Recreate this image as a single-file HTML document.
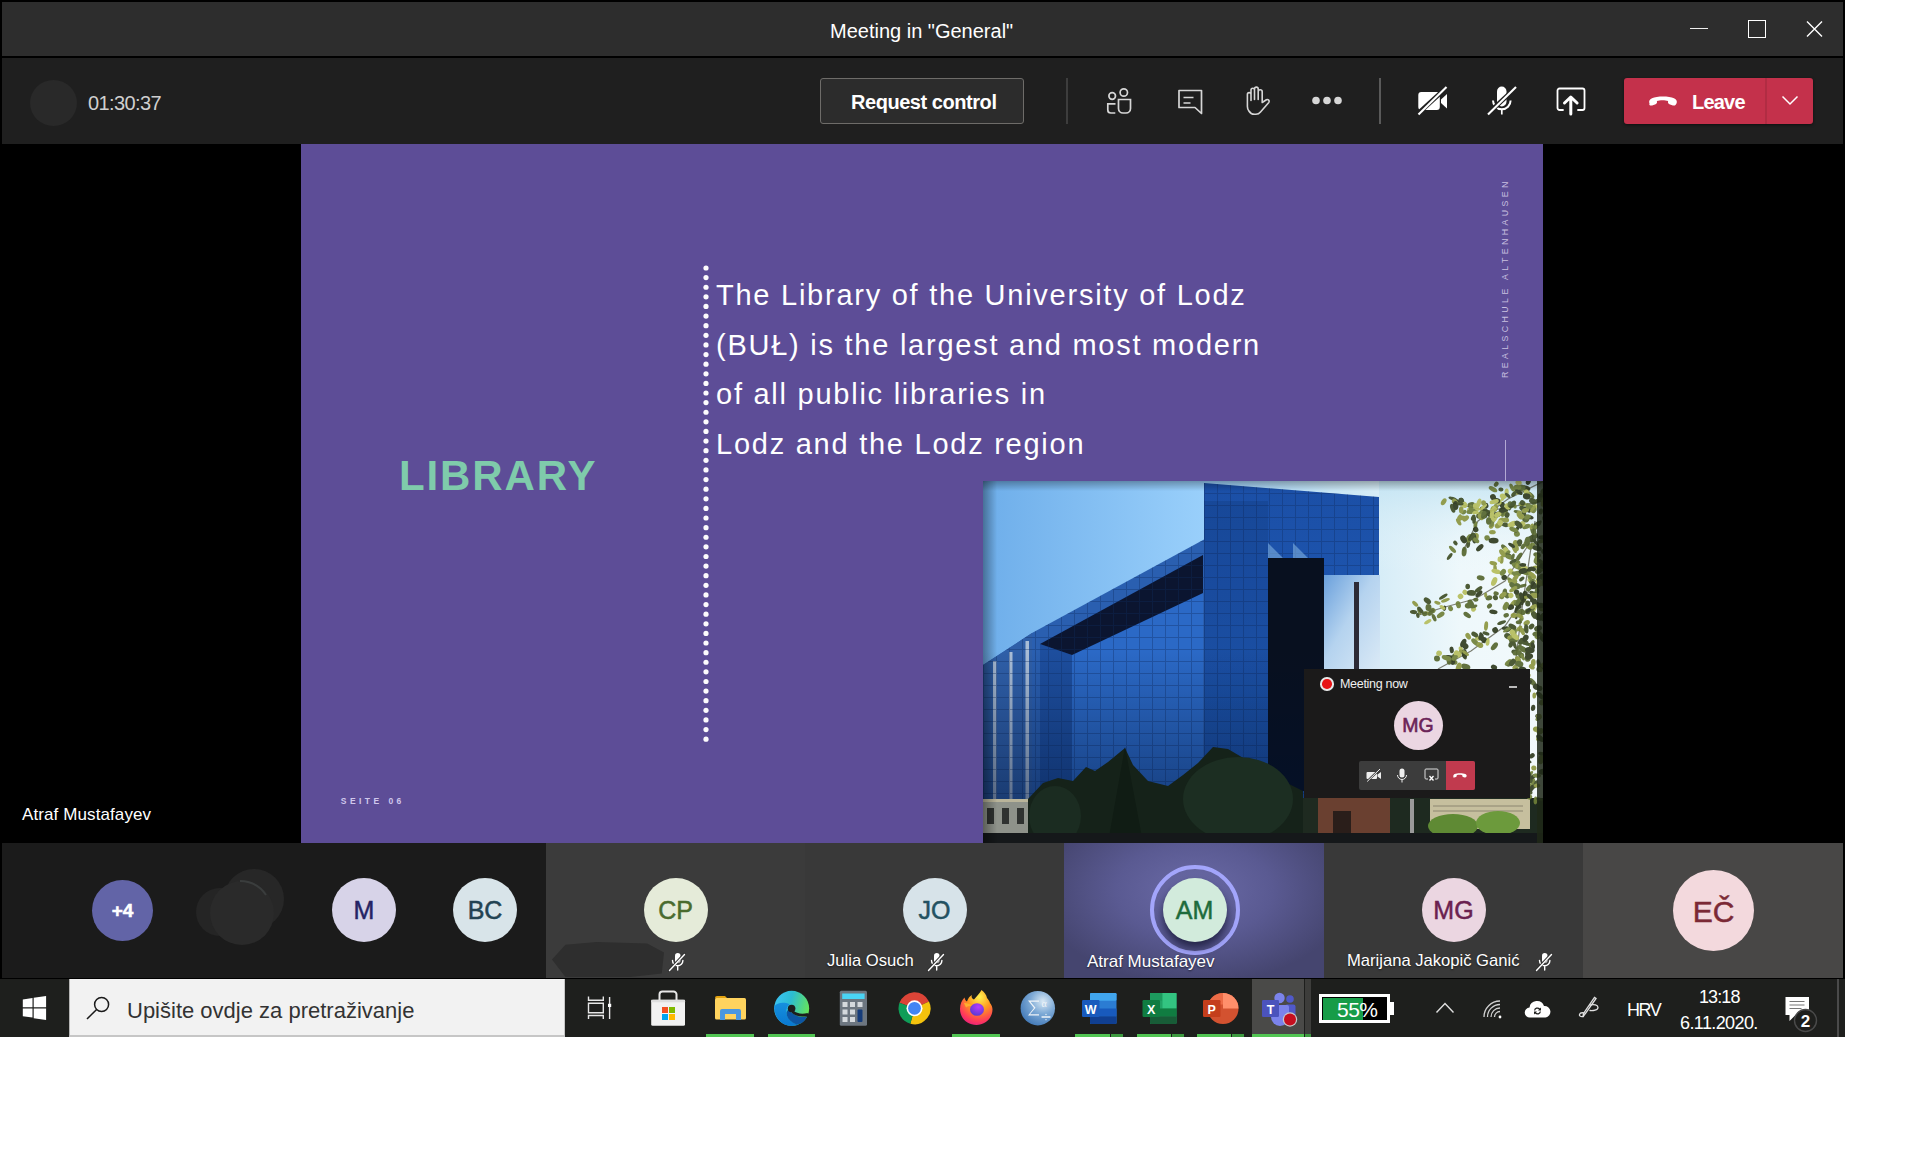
<!DOCTYPE html>
<html><head><meta charset="utf-8">
<style>
*{margin:0;padding:0;box-sizing:border-box}
html,body{width:1920px;height:1162px;overflow:hidden;background:#fff;font-family:"Liberation Sans",sans-serif}
.a{position:absolute}
#win{left:0;top:0;width:1845px;height:979px;background:#000}
#title{left:2px;top:2px;width:1841px;height:54px;background:#2d2d2d}
#tool{left:2px;top:58px;width:1841px;height:86px;background:#1f1f1f}
#slide{left:301px;top:144px;width:1242px;height:699px;background:#5d4d97;overflow:hidden}
#strip{left:2px;top:843px;width:1841px;height:135px;background:#1b1b1b}
.av{position:absolute;border-radius:50%;text-align:center;font-family:"Liberation Sans",sans-serif;-webkit-text-stroke:0.5px currentColor}
.nm{position:absolute;white-space:nowrap;line-height:1;font-size:17px;color:#fff;text-shadow:0 1px 2px rgba(0,0,0,.6)}
#task{left:0;top:979px;width:1845px;height:58px;background:#1e1f1d}
.t{white-space:nowrap;line-height:1}
</style></head><body>
<div id="win" class="a"></div>
<div id="title" class="a"></div>
<div class="a t" style="left:830px;top:21px;font-size:20px;color:#fff">Meeting in "General"</div>

<div class="a" style="left:1690px;top:27.5px;width:18px;height:1.2px;background:#eee"></div>
<div class="a" style="left:1748px;top:20px;width:17.5px;height:17.5px;border:1.5px solid #fff"></div>
<svg class="a" style="left:1804px;top:18px" width="22" height="22" viewBox="0 0 22 22" stroke="#fff" stroke-width="1.4"><path d="M3 3.5l15 15M18 3.5l-15 15"/></svg>
<div id="tool" class="a"></div>

<div class="a" style="left:30px;top:80px;width:47px;height:46px;border-radius:50%;background:#292929"></div>
<div class="a t" style="left:88px;top:93px;font-size:20px;color:#cfcfcf;letter-spacing:-0.6px">01:30:37</div>
<div class="a" style="left:820px;top:78px;width:204px;height:46px;border:1.5px solid #6e6c69;border-radius:3px;background:#2c2c2c"></div>
<div class="a t" style="left:851px;top:92px;font-size:20px;font-weight:bold;color:#fff;letter-spacing:-0.45px">Request control</div>
<div class="a" style="left:1066px;top:78px;width:2px;height:46px;background:#3d3d3d"></div>
<div class="a" style="left:1379px;top:78px;width:2px;height:46px;background:#5a5a5a"></div>
<svg class="a" style="left:1100px;top:84px" width="40" height="40" viewBox="0 0 40 40" fill="none" stroke="#d6d6d6" stroke-width="1.7">
 <circle cx="12.2" cy="12" r="3.3"/><circle cx="23.8" cy="8.5" r="3.7"/>
 <path d="M15.5 19.8H7.8v6.2a3 3 0 0 0 3 3h4.5"/><path d="M18.5 15.5h12v9a4.5 4.5 0 0 1-4.5 4.5h-3a4.5 4.5 0 0 1-4.5-4.5z"/>
</svg>
<svg class="a" style="left:1170px;top:80px" width="40" height="40" viewBox="0 0 40 40" fill="none" stroke="#d6d6d6" stroke-width="1.7" stroke-linejoin="round">
 <path d="M9 10.5h22.5v23l-6.5-6H9z"/><path d="M13.5 17.5h10M13.5 23h7"/>
</svg>
<svg class="a" style="left:1236px;top:80px" width="40" height="40" viewBox="0 0 40 40" fill="none" stroke="#d6d6d6" stroke-width="1.6" stroke-linejoin="round" stroke-linecap="round">
 <path d="M15 20.5V14.4a1.8 1.8 0 0 0-3.6 0V26.5q0 2.5 1.5 4.5a6.5 6.5 0 0 0 5.5 3.3h1.5a6 6 0 0 0 4.6-2.3l8.3-9.6a1.8 1.8 0 0 0-2.4-2.6L26.2 22.5V11.8a2 2 0 0 0-4 0V19.5M22.2 19.5V9a1.85 1.85 0 0 0-3.7 0V19.5M18.5 19.5V10a1.75 1.75 0 0 0-3.5 0V20.5"/>
</svg>
<svg class="a" style="left:1308px;top:90px" width="40" height="20" viewBox="0 0 40 20" fill="#d6d6d6">
 <circle cx="8" cy="10.5" r="3.8"/><circle cx="19" cy="10.5" r="3.8"/><circle cx="30" cy="10.5" r="3.8"/>
</svg>
<svg class="a" style="left:1412px;top:80px" width="40" height="40" viewBox="0 0 40 40">
 <path d="M6.3 15a3 3 0 0 1 3-3h15.5a3 3 0 0 1 3 3v12a3 3 0 0 1-3 3h-15.5a3 3 0 0 1-3-3z" fill="#fff"/>
 <path d="M29 19.5l6-5.5v14.5l-6-5.5z" fill="#fff"/>
 <path d="M5.5 34L34 8" stroke="#1f1f1f" stroke-width="4.5"/>
 <path d="M6.5 34.5L34.5 7" stroke="#fff" stroke-width="2.1"/>
</svg>
<svg class="a" style="left:1482px;top:80px" width="40" height="40" viewBox="0 0 40 40">
 <rect x="15" y="6.5" width="9.5" height="20" rx="4.75" fill="#fff"/>
 <path d="M11 20.5a8.8 8.8 0 0 0 17.6 0" fill="none" stroke="#fff" stroke-width="2"/>
 <path d="M19.8 29v5.5" stroke="#fff" stroke-width="1.7"/>
 <path d="M5.5 34L33.5 8" stroke="#1f1f1f" stroke-width="4.5"/>
 <path d="M6 34.5L34 7" stroke="#fff" stroke-width="2.1"/>
</svg>
<svg class="a" style="left:1551px;top:80px" width="40" height="40" viewBox="0 0 40 40" fill="none" stroke="#fff" stroke-width="1.8" stroke-linejoin="round" stroke-linecap="round">
 <path d="M12 30H8.5a2 2 0 0 1-2-2V10.5a2 2 0 0 1 2-2h23a2 2 0 0 1 2 2V28a2 2 0 0 1-2 2H27"/>
 <path d="M19.8 34V19M13.5 23l6.3-6 6.3 6" stroke-width="3"/>
</svg>
<div class="a" style="left:1624px;top:78px;width:189px;height:46px;border-radius:3px;background:#c4314b;box-shadow:0 1px 3px rgba(0,0,0,.5)"></div>
<div class="a" style="left:1765px;top:78px;width:2px;height:46px;background:#b12c43"></div>
<svg class="a" style="left:1646px;top:90px" width="34" height="20" viewBox="0 0 34 20">
 <path d="M3.5 13.5c-1-2 0-4 2.5-5.2C11 6 23 6 28 8.3c2.5 1.2 3.5 3.2 2.5 5.2l-.8 1.2c-.6.9-1.8 1-2.8.7l-3.5-1.1c-1-.3-1.5-1.2-1.4-2.2l.1-1.2c-3-1-8.2-1-11.2 0l.1 1.2c.1 1-.4 1.9-1.4 2.2L6.1 15.4c-1 .3-2.2.2-2.8-.7z" fill="#fff"/>
</svg>
<div class="a t" style="left:1692px;top:92px;font-size:20px;font-weight:bold;color:#fff;letter-spacing:-0.8px">Leave</div>
<svg class="a" style="left:1780px;top:92px" width="20" height="16" viewBox="0 0 20 16" fill="none" stroke="#fff" stroke-width="1.5">
 <path d="M2.5 4.5L10 12l7.5-7.5"/>
</svg>
<div id="slide" class="a">
 <div class="a t" style="left:98px;top:311px;font-size:42px;font-weight:bold;color:#7fcbab;letter-spacing:1.9px">LIBRARY</div>
 <svg class="a" style="left:400.7px;top:120.3px" width="8" height="480" viewBox="0 0 8 480" fill="#fdfbfd"><circle cx="4" cy="4.00" r="2.6"/><circle cx="4" cy="13.62" r="2.6"/><circle cx="4" cy="23.23" r="2.6"/><circle cx="4" cy="32.85" r="2.6"/><circle cx="4" cy="42.46" r="2.6"/><circle cx="4" cy="52.08" r="2.6"/><circle cx="4" cy="61.70" r="2.6"/><circle cx="4" cy="71.31" r="2.6"/><circle cx="4" cy="80.93" r="2.6"/><circle cx="4" cy="90.54" r="2.6"/><circle cx="4" cy="100.16" r="2.6"/><circle cx="4" cy="109.78" r="2.6"/><circle cx="4" cy="119.39" r="2.6"/><circle cx="4" cy="129.01" r="2.6"/><circle cx="4" cy="138.62" r="2.6"/><circle cx="4" cy="148.24" r="2.6"/><circle cx="4" cy="157.86" r="2.6"/><circle cx="4" cy="167.47" r="2.6"/><circle cx="4" cy="177.09" r="2.6"/><circle cx="4" cy="186.70" r="2.6"/><circle cx="4" cy="196.32" r="2.6"/><circle cx="4" cy="205.94" r="2.6"/><circle cx="4" cy="215.55" r="2.6"/><circle cx="4" cy="225.17" r="2.6"/><circle cx="4" cy="234.78" r="2.6"/><circle cx="4" cy="244.40" r="2.6"/><circle cx="4" cy="254.02" r="2.6"/><circle cx="4" cy="263.63" r="2.6"/><circle cx="4" cy="273.25" r="2.6"/><circle cx="4" cy="282.86" r="2.6"/><circle cx="4" cy="292.48" r="2.6"/><circle cx="4" cy="302.10" r="2.6"/><circle cx="4" cy="311.71" r="2.6"/><circle cx="4" cy="321.33" r="2.6"/><circle cx="4" cy="330.94" r="2.6"/><circle cx="4" cy="340.56" r="2.6"/><circle cx="4" cy="350.18" r="2.6"/><circle cx="4" cy="359.79" r="2.6"/><circle cx="4" cy="369.41" r="2.6"/><circle cx="4" cy="379.02" r="2.6"/><circle cx="4" cy="388.64" r="2.6"/><circle cx="4" cy="398.26" r="2.6"/><circle cx="4" cy="407.87" r="2.6"/><circle cx="4" cy="417.49" r="2.6"/><circle cx="4" cy="427.10" r="2.6"/><circle cx="4" cy="436.72" r="2.6"/><circle cx="4" cy="446.34" r="2.6"/><circle cx="4" cy="455.95" r="2.6"/><circle cx="4" cy="465.57" r="2.6"/><circle cx="4" cy="475.18" r="2.6"/></svg>
 <div class="a" style="left:415px;top:127px;font-size:29px;line-height:49.6px;color:#fff;letter-spacing:1.75px;white-space:nowrap">The Library of the University of Lodz<br>(BUŁ) is the largest and most modern<br>of all public libraries in<br>Lodz and the Lodz region</div>
 <div class="a t" style="left:1199.5px;top:38px;width:7px;height:196px;"><div class="a t" style="left:0;top:196px;transform:rotate(-90deg);transform-origin:0 0;font-size:8.8px;color:#c9c0e0;letter-spacing:3.4px">REALSCHULE ALTENHAUSEN</div></div>
 <div class="a" style="left:1203.5px;top:296px;width:1px;height:42px;background:#b3a9d4"></div>
<svg class="a" style="left:682px;top:337px" width="561" height="362" viewBox="0 0 561 362">
 <defs>
  <linearGradient id="sky" x1="0" y1="0" x2="1" y2="0">
   <stop offset="0" stop-color="#6eaeea"/><stop offset="0.4" stop-color="#9ad0fb"/><stop offset="0.62" stop-color="#c8e6f5"/><stop offset="0.85" stop-color="#eef8fb"/><stop offset="1" stop-color="#f2f9fb"/>
  </linearGradient>
  <linearGradient id="skyv" x1="0" y1="0" x2="0" y2="1">
   <stop offset="0" stop-color="#bfe2f2" stop-opacity="0.8"/><stop offset="0.5" stop-color="#eaf6fa" stop-opacity="0"/>
  </linearGradient>
  <linearGradient id="facev" x1="0" y1="0" x2="0" y2="1">
   <stop offset="0" stop-color="#1f57b0"/><stop offset="0.7" stop-color="#2c6cc8"/><stop offset="1" stop-color="#2a62b8"/>
  </linearGradient>
  <linearGradient id="tow" x1="0" y1="0" x2="0" y2="1">
   <stop offset="0" stop-color="#1b4fa6"/><stop offset="1" stop-color="#2260bf"/>
  </linearGradient>
  <linearGradient id="refl" x1="0" y1="0" x2="1" y2="1">
   <stop offset="0" stop-color="#6aa0dc"/><stop offset="0.45" stop-color="#b5d3ef"/><stop offset="1" stop-color="#dbeaf6"/>
  </linearGradient>
  <pattern id="grid" width="13" height="12" patternUnits="userSpaceOnUse">
   <path d="M0 0.5H13M0.5 0V12" stroke="#0c2a5e" stroke-width="1" opacity="0.35"/>
  </pattern>
  <linearGradient id="vigl" x1="0" y1="0" x2="1" y2="0"><stop offset="0" stop-color="#000" stop-opacity="0.35"/><stop offset="1" stop-color="#000" stop-opacity="0"/></linearGradient>
  <linearGradient id="vigt" x1="0" y1="0" x2="0" y2="1"><stop offset="0" stop-color="#000" stop-opacity="0.3"/><stop offset="1" stop-color="#000" stop-opacity="0"/></linearGradient>
 </defs>
 <rect width="561" height="362" fill="url(#sky)"/>
 <rect x="396" width="165" height="180" fill="url(#skyv)"/>
 <!-- left wing -->
 <path d="M0 184L49 152L221 58.6V362H0z" fill="#2a5fb0"/>
 <path d="M57 163L220 74V362H57z" fill="url(#facev)"/>
 <path d="M89 174L220 112V362H89z" fill="#2b69c6"/>
 <path d="M57 163L89 174V362H57z" fill="#1d4e9e"/>
 <path d="M0 184L49 152V362H0z" fill="#2f5fa8"/>
 <path d="M10 180h3.5v148h-3.5zM26 171h3.5v157h-3.5zM42.5 160h3.5v168h-3.5z" fill="#a9bdd6"/>
 <path d="M57 163L220 74V112L89 174z" fill="#0b1530"/>
 <path d="M49 152L221 58.6V362H49z" fill="url(#grid)"/>
 <path d="M0 184L49 152V362H0z" fill="url(#grid)"/>
 <!-- tower -->
 <path d="M221 2L396 16V94L351 101V362H221z" fill="url(#tow)"/>
 <path d="M221 2L396 16V94L351 101V362H221z" fill="url(#grid)"/>
 <path d="M285 62L300 77H285zM310 62L325 77H310z" fill="#7fb0e0" opacity="0.6"/>
 <path d="M341 94H397V190H341z" fill="url(#refl)"/>
 <path d="M285 77H341V310H285z" fill="#08101f"/>
 <path d="M371 101h5V190h-5z" fill="#2c2a36"/>
 <linearGradient id="dk" x1="0" y1="0" x2="0" y2="1"><stop offset="0" stop-color="#001030" stop-opacity="0"/><stop offset="1" stop-color="#001030" stop-opacity="0.45"/></linearGradient>
 <rect x="0" y="170" width="341" height="150" fill="url(#dk)"/>
 <rect x="221" y="20" width="64" height="300" fill="#001030" opacity="0.12"/>
 <!-- trees -->
 <path d="M45 362V318L60 302L75 297L90 300L103 286L112 290L125 281L142 267L150 284L165 300L185 305L200 294L215 282L230 266L245 268L262 278L280 290L300 300L320 310V362z" fill="#152219"/>
 <path d="M125 362L142 266L160 362z" fill="#101c14"/>
 <ellipse cx="255" cy="318" rx="55" ry="42" fill="#1c2e22"/>
 <ellipse cx="72" cy="335" rx="26" ry="30" fill="#1b2c21"/>
 <path d="M0 319H45V362H0z" fill="#8e928a"/>
 <path d="M4 327h7v16h-7zM19 327h7v16h-7zM34 327h7v16h-7z" fill="#2f3230"/>
 <path d="M0 318H45V321H0z" fill="#b9b49a"/>
 <path d="M320 317H561V362H320z" fill="#1e2a20"/>
 <path d="M335 317H407V355H335z" fill="#6a4030"/>
 <path d="M350 330h18v25h-18z" fill="#2a1e1a"/>
 <path d="M447 318H547V348H447z" fill="#c6bf9e"/>
 <path d="M450 325h90M450 330h90" stroke="#8c8670" stroke-width="1"/>
 <ellipse cx="470" cy="345" rx="25" ry="12" fill="#5f8a34"/><ellipse cx="515" cy="342" rx="22" ry="12" fill="#6c9a3c"/>
 <path d="M427 318h4v44h-4z" fill="#9a9a9a"/>
 <path d="M0 352H561V362H0z" fill="#15181a"/>
 <!-- right tree -->
 <g stroke="#4a4a38" stroke-width="1.2" fill="none" opacity="0.7"><path d="M561 0 L525 18 L495 40 L480 70 M548 60 L522 100 L492 118 L462 126 L436 134 M556 95 L522 145 L488 170 L455 188 M552 40 L540 120 L532 185 M561 20 L505 30 L470 22"/></g>
 <g opacity="0.92"><ellipse cx="538.8" cy="27.1" rx="2.7" ry="2.4" transform="rotate(65 538.8 27.1)" fill="#3f4d24"/><ellipse cx="485.2" cy="63.6" rx="3.5" ry="1.9" transform="rotate(99 485.2 63.6)" fill="#3f4d24"/><ellipse cx="492.8" cy="56.1" rx="4.1" ry="2.9" transform="rotate(103 492.8 56.1)" fill="#8c9640"/><ellipse cx="559.2" cy="16.2" rx="2.8" ry="2.2" transform="rotate(97 559.2 16.2)" fill="#b5bd5c"/><ellipse cx="533.4" cy="9.8" rx="4.0" ry="2.5" transform="rotate(67 533.4 9.8)" fill="#b5bd5c"/><ellipse cx="482.8" cy="37.5" rx="3.7" ry="2.3" transform="rotate(139 482.8 37.5)" fill="#8c9640"/><ellipse cx="497.0" cy="34.6" rx="4.5" ry="2.6" transform="rotate(43 497.0 34.6)" fill="#b5bd5c"/><ellipse cx="520.3" cy="15.2" rx="3.6" ry="2.5" transform="rotate(13 520.3 15.2)" fill="#b5bd5c"/><ellipse cx="520.3" cy="16.6" rx="3.7" ry="1.7" transform="rotate(120 520.3 16.6)" fill="#b5bd5c"/><ellipse cx="512.3" cy="26.9" rx="4.2" ry="2.4" transform="rotate(104 512.3 26.9)" fill="#8c9640"/><ellipse cx="508.6" cy="44.6" rx="3.3" ry="2.4" transform="rotate(122 508.6 44.6)" fill="#8c9640"/><ellipse cx="519.3" cy="23.5" rx="2.6" ry="2.2" transform="rotate(30 519.3 23.5)" fill="#3f4d24"/><ellipse cx="515.0" cy="33.4" rx="4.3" ry="2.2" transform="rotate(165 515.0 33.4)" fill="#8c9640"/><ellipse cx="536.9" cy="8.3" rx="4.7" ry="2.7" transform="rotate(155 536.9 8.3)" fill="#6f7f38"/><ellipse cx="508.2" cy="39.9" rx="3.5" ry="1.9" transform="rotate(14 508.2 39.9)" fill="#56662e"/><ellipse cx="539.5" cy="22.9" rx="4.0" ry="2.0" transform="rotate(0 539.5 22.9)" fill="#8c9640"/><ellipse cx="502.7" cy="24.7" rx="2.8" ry="2.8" transform="rotate(171 502.7 24.7)" fill="#2f3a1e"/><ellipse cx="515.7" cy="43.9" rx="4.4" ry="2.8" transform="rotate(143 515.7 43.9)" fill="#8c9640"/><ellipse cx="511.7" cy="26.7" rx="3.5" ry="1.9" transform="rotate(177 511.7 26.7)" fill="#8c9640"/><ellipse cx="542.6" cy="10.9" rx="2.5" ry="1.8" transform="rotate(18 542.6 10.9)" fill="#6f7f38"/><ellipse cx="508.5" cy="36.7" rx="3.4" ry="2.5" transform="rotate(171 508.5 36.7)" fill="#b5bd5c"/><ellipse cx="540.8" cy="30.5" rx="5.0" ry="2.3" transform="rotate(87 540.8 30.5)" fill="#3f4d24"/><ellipse cx="510.0" cy="16.0" rx="3.0" ry="2.9" transform="rotate(65 510.0 16.0)" fill="#2f3a1e"/><ellipse cx="521.2" cy="31.5" rx="4.9" ry="2.8" transform="rotate(125 521.2 31.5)" fill="#6f7f38"/><ellipse cx="519.2" cy="24.0" rx="3.1" ry="2.4" transform="rotate(90 519.2 24.0)" fill="#2f3a1e"/><ellipse cx="492.4" cy="44.2" rx="4.3" ry="1.9" transform="rotate(93 492.4 44.2)" fill="#6f7f38"/><ellipse cx="509.0" cy="42.5" rx="3.7" ry="1.9" transform="rotate(108 509.0 42.5)" fill="#6f7f38"/><ellipse cx="547.3" cy="13.6" rx="4.9" ry="2.1" transform="rotate(39 547.3 13.6)" fill="#56662e"/><ellipse cx="508.9" cy="33.4" rx="5.0" ry="2.5" transform="rotate(0 508.9 33.4)" fill="#2f3a1e"/><ellipse cx="513.2" cy="3.3" rx="2.8" ry="2.1" transform="rotate(128 513.2 3.3)" fill="#56662e"/><ellipse cx="522.8" cy="39.1" rx="3.3" ry="2.7" transform="rotate(174 522.8 39.1)" fill="#8c9640"/><ellipse cx="515.8" cy="21.0" rx="2.9" ry="3.0" transform="rotate(4 515.8 21.0)" fill="#b5bd5c"/><ellipse cx="486.2" cy="57.3" rx="4.6" ry="3.0" transform="rotate(118 486.2 57.3)" fill="#6f7f38"/><ellipse cx="543.0" cy="7.1" rx="4.5" ry="2.6" transform="rotate(18 543.0 7.1)" fill="#2f3a1e"/><ellipse cx="469.5" cy="68.3" rx="4.6" ry="1.9" transform="rotate(45 469.5 68.3)" fill="#6f7f38"/><ellipse cx="513.4" cy="19.7" rx="3.9" ry="2.8" transform="rotate(10 513.4 19.7)" fill="#2f3a1e"/><ellipse cx="511.2" cy="20.7" rx="4.8" ry="2.2" transform="rotate(165 511.2 20.7)" fill="#b5bd5c"/><ellipse cx="557.1" cy="16.7" rx="4.7" ry="2.7" transform="rotate(109 557.1 16.7)" fill="#56662e"/><ellipse cx="523.6" cy="11.3" rx="3.9" ry="2.1" transform="rotate(93 523.6 11.3)" fill="#b5bd5c"/><ellipse cx="517.9" cy="8.5" rx="2.6" ry="1.9" transform="rotate(7 517.9 8.5)" fill="#3f4d24"/><ellipse cx="495.7" cy="22.2" rx="4.8" ry="2.2" transform="rotate(110 495.7 22.2)" fill="#b5bd5c"/><ellipse cx="505.7" cy="40.0" rx="3.8" ry="2.7" transform="rotate(91 505.7 40.0)" fill="#56662e"/><ellipse cx="510.5" cy="28.0" rx="3.1" ry="2.4" transform="rotate(169 510.5 28.0)" fill="#8c9640"/><ellipse cx="557.6" cy="14.6" rx="2.7" ry="1.9" transform="rotate(13 557.6 14.6)" fill="#2f3a1e"/><ellipse cx="545.7" cy="26.5" rx="4.8" ry="2.5" transform="rotate(65 545.7 26.5)" fill="#6f7f38"/><ellipse cx="491.2" cy="57.5" rx="4.9" ry="2.2" transform="rotate(87 491.2 57.5)" fill="#2f3a1e"/><ellipse cx="492.9" cy="59.3" rx="3.8" ry="2.1" transform="rotate(35 492.9 59.3)" fill="#6f7f38"/><ellipse cx="543.8" cy="11.8" rx="3.6" ry="2.6" transform="rotate(69 543.8 11.8)" fill="#b5bd5c"/><ellipse cx="498.1" cy="34.9" rx="5.0" ry="2.7" transform="rotate(174 498.1 34.9)" fill="#3f4d24"/><ellipse cx="548.7" cy="27.3" rx="3.0" ry="2.7" transform="rotate(147 548.7 27.3)" fill="#2f3a1e"/><ellipse cx="488.7" cy="55.8" rx="4.8" ry="2.4" transform="rotate(126 488.7 55.8)" fill="#3f4d24"/><ellipse cx="535.6" cy="8.0" rx="4.7" ry="2.0" transform="rotate(3 535.6 8.0)" fill="#3f4d24"/><ellipse cx="504.1" cy="56.9" rx="2.7" ry="2.8" transform="rotate(81 504.1 56.9)" fill="#6f7f38"/><ellipse cx="466.7" cy="75.6" rx="4.1" ry="1.7" transform="rotate(127 466.7 75.6)" fill="#3f4d24"/><ellipse cx="481.2" cy="70.6" rx="4.8" ry="2.5" transform="rotate(95 481.2 70.6)" fill="#56662e"/><ellipse cx="524.7" cy="14.4" rx="3.4" ry="1.6" transform="rotate(45 524.7 14.4)" fill="#3f4d24"/><ellipse cx="511.7" cy="37.0" rx="4.1" ry="2.5" transform="rotate(118 511.7 37.0)" fill="#b5bd5c"/><ellipse cx="480.6" cy="58.4" rx="4.2" ry="3.0" transform="rotate(61 480.6 58.4)" fill="#2f3a1e"/><ellipse cx="510.6" cy="59.6" rx="5.0" ry="2.8" transform="rotate(2 510.6 59.6)" fill="#2f3a1e"/><ellipse cx="492.7" cy="48.5" rx="2.7" ry="2.8" transform="rotate(156 492.7 48.5)" fill="#2f3a1e"/><ellipse cx="472.4" cy="62.0" rx="2.6" ry="1.9" transform="rotate(48 472.4 62.0)" fill="#3f4d24"/><ellipse cx="509.4" cy="51.2" rx="3.3" ry="2.1" transform="rotate(0 509.4 51.2)" fill="#8c9640"/><ellipse cx="549.1" cy="19.6" rx="3.1" ry="2.7" transform="rotate(16 549.1 19.6)" fill="#3f4d24"/><ellipse cx="535.6" cy="1.7" rx="3.2" ry="2.5" transform="rotate(15 535.6 1.7)" fill="#b5bd5c"/><ellipse cx="496.8" cy="66.7" rx="4.5" ry="2.4" transform="rotate(137 496.8 66.7)" fill="#2f3a1e"/><ellipse cx="444.8" cy="140.7" rx="4.1" ry="1.7" transform="rotate(150 444.8 140.7)" fill="#b5bd5c"/><ellipse cx="484.7" cy="105.5" rx="2.8" ry="2.3" transform="rotate(90 484.7 105.5)" fill="#3f4d24"/><ellipse cx="444.4" cy="119.8" rx="4.2" ry="2.6" transform="rotate(41 444.4 119.8)" fill="#3f4d24"/><ellipse cx="522.2" cy="43.9" rx="3.4" ry="2.2" transform="rotate(9 522.2 43.9)" fill="#3f4d24"/><ellipse cx="481.9" cy="111.3" rx="2.5" ry="2.7" transform="rotate(134 481.9 111.3)" fill="#b5bd5c"/><ellipse cx="457.7" cy="133.9" rx="4.4" ry="2.3" transform="rotate(145 457.7 133.9)" fill="#6f7f38"/><ellipse cx="530.3" cy="80.6" rx="4.1" ry="2.2" transform="rotate(152 530.3 80.6)" fill="#3f4d24"/><ellipse cx="497.7" cy="96.9" rx="4.0" ry="2.5" transform="rotate(13 497.7 96.9)" fill="#56662e"/><ellipse cx="512.1" cy="87.5" rx="4.1" ry="1.8" transform="rotate(86 512.1 87.5)" fill="#8c9640"/><ellipse cx="518.6" cy="78.6" rx="4.2" ry="2.0" transform="rotate(92 518.6 78.6)" fill="#8c9640"/><ellipse cx="510.3" cy="82.2" rx="3.9" ry="2.0" transform="rotate(15 510.3 82.2)" fill="#8c9640"/><ellipse cx="521.8" cy="67.3" rx="4.9" ry="2.2" transform="rotate(48 521.8 67.3)" fill="#56662e"/><ellipse cx="449.9" cy="129.5" rx="2.7" ry="2.6" transform="rotate(47 449.9 129.5)" fill="#6f7f38"/><ellipse cx="544.5" cy="64.4" rx="4.7" ry="2.6" transform="rotate(41 544.5 64.4)" fill="#8c9640"/><ellipse cx="530.2" cy="122.5" rx="4.2" ry="2.2" transform="rotate(130 530.2 122.5)" fill="#8c9640"/><ellipse cx="512.4" cy="116.6" rx="2.5" ry="2.7" transform="rotate(151 512.4 116.6)" fill="#3f4d24"/><ellipse cx="444.5" cy="132.4" rx="4.3" ry="2.0" transform="rotate(11 444.5 132.4)" fill="#8c9640"/><ellipse cx="430.5" cy="131.1" rx="3.6" ry="2.0" transform="rotate(8 430.5 131.1)" fill="#3f4d24"/><ellipse cx="533.9" cy="52.9" rx="2.9" ry="3.0" transform="rotate(78 533.9 52.9)" fill="#6f7f38"/><ellipse cx="511.2" cy="100.5" rx="4.7" ry="2.7" transform="rotate(113 511.2 100.5)" fill="#b5bd5c"/><ellipse cx="495.9" cy="112.7" rx="4.3" ry="2.2" transform="rotate(135 495.9 112.7)" fill="#2f3a1e"/><ellipse cx="436.2" cy="129.9" rx="3.9" ry="1.8" transform="rotate(74 436.2 129.9)" fill="#6f7f38"/><ellipse cx="522.9" cy="69.2" rx="3.2" ry="2.5" transform="rotate(54 522.9 69.2)" fill="#b5bd5c"/><ellipse cx="490.6" cy="128.3" rx="2.7" ry="2.3" transform="rotate(146 490.6 128.3)" fill="#b5bd5c"/><ellipse cx="513.1" cy="112.4" rx="2.7" ry="2.1" transform="rotate(16 513.1 112.4)" fill="#56662e"/><ellipse cx="521.2" cy="96.4" rx="2.6" ry="2.8" transform="rotate(68 521.2 96.4)" fill="#2f3a1e"/><ellipse cx="492.8" cy="118.7" rx="2.7" ry="2.0" transform="rotate(174 492.8 118.7)" fill="#56662e"/><ellipse cx="462.4" cy="119.3" rx="4.6" ry="1.7" transform="rotate(161 462.4 119.3)" fill="#8c9640"/><ellipse cx="488.4" cy="111.9" rx="4.6" ry="2.8" transform="rotate(3 488.4 111.9)" fill="#3f4d24"/><ellipse cx="513.2" cy="90.4" rx="4.9" ry="2.3" transform="rotate(13 513.2 90.4)" fill="#b5bd5c"/><ellipse cx="461.4" cy="127.2" rx="2.8" ry="1.8" transform="rotate(94 461.4 127.2)" fill="#2f3a1e"/><ellipse cx="549.0" cy="58.2" rx="4.6" ry="2.9" transform="rotate(15 549.0 58.2)" fill="#3f4d24"/><ellipse cx="560.7" cy="70.5" rx="2.6" ry="2.6" transform="rotate(173 560.7 70.5)" fill="#2f3a1e"/><ellipse cx="516.2" cy="78.3" rx="2.8" ry="1.7" transform="rotate(94 516.2 78.3)" fill="#b5bd5c"/><ellipse cx="531.7" cy="100.5" rx="2.5" ry="2.4" transform="rotate(179 531.7 100.5)" fill="#6f7f38"/><ellipse cx="432.2" cy="122.8" rx="3.7" ry="1.9" transform="rotate(44 432.2 122.8)" fill="#8c9640"/><ellipse cx="475.3" cy="123.7" rx="3.7" ry="2.5" transform="rotate(75 475.3 123.7)" fill="#6f7f38"/><ellipse cx="519.9" cy="91.3" rx="3.7" ry="2.6" transform="rotate(129 519.9 91.3)" fill="#6f7f38"/><ellipse cx="484.2" cy="134.0" rx="4.3" ry="2.3" transform="rotate(36 484.2 134.0)" fill="#56662e"/><ellipse cx="527.7" cy="90.6" rx="3.1" ry="2.7" transform="rotate(53 527.7 90.6)" fill="#b5bd5c"/><ellipse cx="505.9" cy="116.9" rx="3.5" ry="2.5" transform="rotate(170 505.9 116.9)" fill="#56662e"/><ellipse cx="448.1" cy="131.2" rx="4.0" ry="2.2" transform="rotate(127 448.1 131.2)" fill="#56662e"/><ellipse cx="534.1" cy="92.8" rx="4.3" ry="3.0" transform="rotate(167 534.1 92.8)" fill="#6f7f38"/><ellipse cx="524.5" cy="72.4" rx="3.7" ry="2.0" transform="rotate(130 524.5 72.4)" fill="#6f7f38"/><ellipse cx="434.8" cy="134.3" rx="2.7" ry="1.7" transform="rotate(75 434.8 134.3)" fill="#3f4d24"/><ellipse cx="495.6" cy="108.3" rx="4.4" ry="2.0" transform="rotate(144 495.6 108.3)" fill="#3f4d24"/><ellipse cx="531.2" cy="67.6" rx="4.8" ry="1.9" transform="rotate(65 531.2 67.6)" fill="#8c9640"/><ellipse cx="524.3" cy="74.3" rx="4.4" ry="1.7" transform="rotate(6 524.3 74.3)" fill="#3f4d24"/><ellipse cx="467.6" cy="127.5" rx="2.7" ry="2.4" transform="rotate(65 467.6 127.5)" fill="#6f7f38"/><ellipse cx="437.5" cy="129.2" rx="4.3" ry="2.0" transform="rotate(49 437.5 129.2)" fill="#3f4d24"/><ellipse cx="460.3" cy="115.6" rx="4.9" ry="1.7" transform="rotate(148 460.3 115.6)" fill="#3f4d24"/><ellipse cx="531.0" cy="104.2" rx="3.5" ry="2.0" transform="rotate(77 531.0 104.2)" fill="#8c9640"/><ellipse cx="536.1" cy="75.7" rx="4.8" ry="2.0" transform="rotate(124 536.1 75.7)" fill="#56662e"/><ellipse cx="485.2" cy="124.8" rx="3.4" ry="2.7" transform="rotate(14 485.2 124.8)" fill="#56662e"/><ellipse cx="521.7" cy="111.6" rx="4.1" ry="2.3" transform="rotate(98 521.7 111.6)" fill="#56662e"/><ellipse cx="454.4" cy="121.8" rx="3.2" ry="1.7" transform="rotate(17 454.4 121.8)" fill="#8c9640"/><ellipse cx="441.9" cy="132.9" rx="2.8" ry="2.2" transform="rotate(160 441.9 132.9)" fill="#56662e"/><ellipse cx="477.5" cy="115.4" rx="2.8" ry="2.8" transform="rotate(52 477.5 115.4)" fill="#b5bd5c"/><ellipse cx="527.2" cy="99.2" rx="3.6" ry="1.9" transform="rotate(42 527.2 99.2)" fill="#6f7f38"/><ellipse cx="445.5" cy="126.6" rx="3.5" ry="3.0" transform="rotate(91 445.5 126.6)" fill="#56662e"/><ellipse cx="491.9" cy="125.3" rx="2.6" ry="1.6" transform="rotate(158 491.9 125.3)" fill="#56662e"/><ellipse cx="459.5" cy="126.4" rx="3.2" ry="1.8" transform="rotate(34 459.5 126.4)" fill="#b5bd5c"/><ellipse cx="546.6" cy="88.5" rx="2.9" ry="2.4" transform="rotate(139 546.6 88.5)" fill="#2f3a1e"/><ellipse cx="451.1" cy="136.7" rx="4.0" ry="1.9" transform="rotate(66 451.1 136.7)" fill="#56662e"/><ellipse cx="548.4" cy="65.2" rx="4.3" ry="2.9" transform="rotate(146 548.4 65.2)" fill="#6f7f38"/><ellipse cx="502.7" cy="114.1" rx="2.7" ry="1.6" transform="rotate(89 502.7 114.1)" fill="#8c9640"/><ellipse cx="554.1" cy="73.9" rx="3.9" ry="2.5" transform="rotate(16 554.1 73.9)" fill="#56662e"/><ellipse cx="510.4" cy="130.8" rx="4.2" ry="2.2" transform="rotate(9 510.4 130.8)" fill="#2f3a1e"/><ellipse cx="487.9" cy="123.0" rx="4.7" ry="3.0" transform="rotate(65 487.9 123.0)" fill="#56662e"/><ellipse cx="503.0" cy="152.4" rx="3.6" ry="1.8" transform="rotate(20 503.0 152.4)" fill="#3f4d24"/><ellipse cx="533.2" cy="135.5" rx="2.9" ry="1.6" transform="rotate(99 533.2 135.5)" fill="#2f3a1e"/><ellipse cx="470.1" cy="180.3" rx="4.8" ry="2.6" transform="rotate(30 470.1 180.3)" fill="#6f7f38"/><ellipse cx="506.5" cy="125.0" rx="2.8" ry="2.3" transform="rotate(144 506.5 125.0)" fill="#56662e"/><ellipse cx="534.1" cy="127.6" rx="4.8" ry="2.0" transform="rotate(109 534.1 127.6)" fill="#2f3a1e"/><ellipse cx="538.4" cy="132.9" rx="4.6" ry="1.8" transform="rotate(141 538.4 132.9)" fill="#56662e"/><ellipse cx="495.7" cy="157.4" rx="3.7" ry="2.4" transform="rotate(7 495.7 157.4)" fill="#b5bd5c"/><ellipse cx="539.0" cy="117.7" rx="4.9" ry="2.7" transform="rotate(34 539.0 117.7)" fill="#b5bd5c"/><ellipse cx="468.7" cy="168.9" rx="3.3" ry="2.1" transform="rotate(82 468.7 168.9)" fill="#2f3a1e"/><ellipse cx="478.0" cy="168.4" rx="3.1" ry="2.1" transform="rotate(66 478.0 168.4)" fill="#b5bd5c"/><ellipse cx="536.2" cy="147.4" rx="3.7" ry="1.9" transform="rotate(137 536.2 147.4)" fill="#8c9640"/><ellipse cx="478.2" cy="170.9" rx="2.7" ry="2.1" transform="rotate(65 478.2 170.9)" fill="#8c9640"/><ellipse cx="512.1" cy="149.1" rx="2.8" ry="2.9" transform="rotate(56 512.1 149.1)" fill="#2f3a1e"/><ellipse cx="524.5" cy="155.0" rx="3.4" ry="2.9" transform="rotate(24 524.5 155.0)" fill="#3f4d24"/><ellipse cx="454.0" cy="177.5" rx="3.0" ry="3.0" transform="rotate(88 454.0 177.5)" fill="#56662e"/><ellipse cx="492.0" cy="161.1" rx="4.6" ry="2.5" transform="rotate(45 492.0 161.1)" fill="#6f7f38"/><ellipse cx="465.5" cy="192.3" rx="2.9" ry="2.3" transform="rotate(165 465.5 192.3)" fill="#56662e"/><ellipse cx="498.4" cy="154.5" rx="3.4" ry="1.9" transform="rotate(72 498.4 154.5)" fill="#2f3a1e"/><ellipse cx="456.1" cy="172.3" rx="2.9" ry="2.7" transform="rotate(20 456.1 172.3)" fill="#b5bd5c"/><ellipse cx="503.1" cy="145.0" rx="4.7" ry="2.0" transform="rotate(96 503.1 145.0)" fill="#8c9640"/><ellipse cx="481.3" cy="175.4" rx="3.4" ry="1.8" transform="rotate(59 481.3 175.4)" fill="#3f4d24"/><ellipse cx="528.7" cy="158.8" rx="2.6" ry="2.7" transform="rotate(45 528.7 158.8)" fill="#2f3a1e"/><ellipse cx="470.6" cy="176.0" rx="4.7" ry="2.6" transform="rotate(134 470.6 176.0)" fill="#56662e"/><ellipse cx="533.9" cy="105.0" rx="3.8" ry="2.9" transform="rotate(23 533.9 105.0)" fill="#56662e"/><ellipse cx="504.6" cy="160.8" rx="3.9" ry="2.0" transform="rotate(94 504.6 160.8)" fill="#b5bd5c"/><ellipse cx="524.0" cy="114.4" rx="3.0" ry="2.5" transform="rotate(85 524.0 114.4)" fill="#56662e"/><ellipse cx="525.4" cy="148.5" rx="4.2" ry="2.0" transform="rotate(146 525.4 148.5)" fill="#3f4d24"/><ellipse cx="491.8" cy="153.5" rx="3.8" ry="2.3" transform="rotate(29 491.8 153.5)" fill="#3f4d24"/><ellipse cx="538.8" cy="97.9" rx="3.1" ry="1.7" transform="rotate(140 538.8 97.9)" fill="#3f4d24"/><ellipse cx="497.9" cy="155.8" rx="3.5" ry="2.3" transform="rotate(115 497.9 155.8)" fill="#2f3a1e"/><ellipse cx="500.5" cy="158.1" rx="3.3" ry="2.0" transform="rotate(8 500.5 158.1)" fill="#2f3a1e"/><ellipse cx="481.5" cy="172.7" rx="4.6" ry="2.6" transform="rotate(83 481.5 172.7)" fill="#2f3a1e"/><ellipse cx="511.0" cy="186.3" rx="3.2" ry="2.5" transform="rotate(22 511.0 186.3)" fill="#2f3a1e"/><ellipse cx="469.7" cy="181.3" rx="2.6" ry="2.5" transform="rotate(122 469.7 181.3)" fill="#2f3a1e"/><ellipse cx="474.5" cy="173.0" rx="4.1" ry="3.0" transform="rotate(39 474.5 173.0)" fill="#b5bd5c"/><ellipse cx="554.1" cy="104.9" rx="4.4" ry="2.9" transform="rotate(134 554.1 104.9)" fill="#6f7f38"/><ellipse cx="527.7" cy="126.1" rx="3.4" ry="2.8" transform="rotate(165 527.7 126.1)" fill="#2f3a1e"/><ellipse cx="465.6" cy="175.7" rx="3.8" ry="1.6" transform="rotate(4 465.6 175.7)" fill="#2f3a1e"/><ellipse cx="553.9" cy="110.6" rx="3.5" ry="2.4" transform="rotate(101 553.9 110.6)" fill="#56662e"/><ellipse cx="550.7" cy="112.6" rx="4.8" ry="2.1" transform="rotate(25 550.7 112.6)" fill="#3f4d24"/><ellipse cx="556.5" cy="101.3" rx="4.6" ry="2.7" transform="rotate(35 556.5 101.3)" fill="#b5bd5c"/><ellipse cx="482.7" cy="185.7" rx="4.8" ry="2.9" transform="rotate(19 482.7 185.7)" fill="#56662e"/><ellipse cx="466.0" cy="179.4" rx="4.4" ry="2.5" transform="rotate(85 466.0 179.4)" fill="#56662e"/><ellipse cx="548.7" cy="99.1" rx="3.3" ry="2.2" transform="rotate(3 548.7 99.1)" fill="#6f7f38"/><ellipse cx="475.7" cy="186.3" rx="4.8" ry="2.7" transform="rotate(108 475.7 186.3)" fill="#8c9640"/><ellipse cx="471.8" cy="176.9" rx="3.5" ry="2.2" transform="rotate(139 471.8 176.9)" fill="#6f7f38"/><ellipse cx="530.9" cy="151.4" rx="4.3" ry="2.8" transform="rotate(103 530.9 151.4)" fill="#6f7f38"/><ellipse cx="551.2" cy="114.8" rx="4.4" ry="3.0" transform="rotate(0 551.2 114.8)" fill="#8c9640"/><ellipse cx="540.0" cy="87.3" rx="4.9" ry="2.4" transform="rotate(172 540.0 87.3)" fill="#b5bd5c"/><ellipse cx="544.8" cy="122.5" rx="3.0" ry="2.6" transform="rotate(89 544.8 122.5)" fill="#3f4d24"/><ellipse cx="463.5" cy="177.0" rx="5.0" ry="2.4" transform="rotate(18 463.5 177.0)" fill="#6f7f38"/><ellipse cx="518.6" cy="141.6" rx="4.7" ry="1.7" transform="rotate(159 518.6 141.6)" fill="#3f4d24"/><ellipse cx="522.7" cy="147.2" rx="3.9" ry="1.8" transform="rotate(176 522.7 147.2)" fill="#2f3a1e"/><ellipse cx="522.8" cy="125.1" rx="4.4" ry="2.7" transform="rotate(116 522.8 125.1)" fill="#6f7f38"/><ellipse cx="485.2" cy="155.3" rx="3.6" ry="2.4" transform="rotate(58 485.2 155.3)" fill="#8c9640"/><ellipse cx="523.2" cy="134.3" rx="2.8" ry="2.2" transform="rotate(159 523.2 134.3)" fill="#56662e"/><ellipse cx="511.4" cy="165.3" rx="4.6" ry="2.5" transform="rotate(130 511.4 165.3)" fill="#56662e"/><ellipse cx="482.4" cy="165.3" rx="3.1" ry="2.9" transform="rotate(46 482.4 165.3)" fill="#2f3a1e"/><ellipse cx="460.9" cy="194.7" rx="3.0" ry="1.8" transform="rotate(26 460.9 194.7)" fill="#6f7f38"/><ellipse cx="482.5" cy="172.0" rx="4.1" ry="1.7" transform="rotate(37 482.5 172.0)" fill="#8c9640"/><ellipse cx="539.3" cy="149.1" rx="3.6" ry="1.9" transform="rotate(176 539.3 149.1)" fill="#6f7f38"/><ellipse cx="527.6" cy="156.8" rx="3.5" ry="2.6" transform="rotate(163 527.6 156.8)" fill="#8c9640"/><ellipse cx="480.3" cy="162.0" rx="4.6" ry="2.5" transform="rotate(117 480.3 162.0)" fill="#2f3a1e"/><ellipse cx="499.8" cy="158.6" rx="4.1" ry="2.2" transform="rotate(56 499.8 158.6)" fill="#2f3a1e"/><ellipse cx="496.9" cy="164.1" rx="3.5" ry="2.6" transform="rotate(28 496.9 164.1)" fill="#8c9640"/><ellipse cx="529.6" cy="100.7" rx="4.7" ry="2.1" transform="rotate(1 529.6 100.7)" fill="#8c9640"/><ellipse cx="538.2" cy="174.5" rx="3.0" ry="2.6" transform="rotate(171 538.2 174.5)" fill="#56662e"/><ellipse cx="551.6" cy="121.6" rx="3.9" ry="2.6" transform="rotate(92 551.6 121.6)" fill="#2f3a1e"/><ellipse cx="530.4" cy="159.4" rx="4.4" ry="2.2" transform="rotate(178 530.4 159.4)" fill="#56662e"/><ellipse cx="543.9" cy="92.2" rx="5.0" ry="2.1" transform="rotate(10 543.9 92.2)" fill="#6f7f38"/><ellipse cx="547.9" cy="96.6" rx="4.8" ry="2.5" transform="rotate(121 547.9 96.6)" fill="#b5bd5c"/><ellipse cx="549.4" cy="94.2" rx="4.8" ry="2.3" transform="rotate(39 549.4 94.2)" fill="#8c9640"/><ellipse cx="554.6" cy="123.9" rx="2.7" ry="2.7" transform="rotate(34 554.6 123.9)" fill="#2f3a1e"/><ellipse cx="543.7" cy="141.9" rx="3.4" ry="2.5" transform="rotate(147 543.7 141.9)" fill="#8c9640"/><ellipse cx="538.1" cy="118.2" rx="2.8" ry="2.8" transform="rotate(63 538.1 118.2)" fill="#56662e"/><ellipse cx="539.6" cy="83.9" rx="3.6" ry="1.9" transform="rotate(0 539.6 83.9)" fill="#2f3a1e"/><ellipse cx="527.9" cy="163.4" rx="3.3" ry="2.3" transform="rotate(112 527.9 163.4)" fill="#3f4d24"/><ellipse cx="524.1" cy="148.6" rx="4.6" ry="1.7" transform="rotate(149 524.1 148.6)" fill="#6f7f38"/><ellipse cx="546.1" cy="163.5" rx="4.1" ry="1.6" transform="rotate(2 546.1 163.5)" fill="#3f4d24"/><ellipse cx="538.2" cy="138.5" rx="2.9" ry="1.9" transform="rotate(139 538.2 138.5)" fill="#6f7f38"/><ellipse cx="538.1" cy="160.4" rx="3.8" ry="2.5" transform="rotate(123 538.1 160.4)" fill="#3f4d24"/><ellipse cx="550.8" cy="128.7" rx="4.6" ry="1.9" transform="rotate(124 550.8 128.7)" fill="#b5bd5c"/><ellipse cx="561.0" cy="37.8" rx="2.8" ry="1.8" transform="rotate(75 561.0 37.8)" fill="#56662e"/><ellipse cx="530.2" cy="105.0" rx="4.8" ry="2.6" transform="rotate(44 530.2 105.0)" fill="#56662e"/><ellipse cx="541.1" cy="117.4" rx="4.6" ry="2.3" transform="rotate(101 541.1 117.4)" fill="#2f3a1e"/><ellipse cx="533.3" cy="85.1" rx="5.0" ry="2.5" transform="rotate(32 533.3 85.1)" fill="#6f7f38"/><ellipse cx="551.4" cy="134.0" rx="4.2" ry="2.9" transform="rotate(59 551.4 134.0)" fill="#3f4d24"/><ellipse cx="518.8" cy="115.6" rx="2.6" ry="2.6" transform="rotate(112 518.8 115.6)" fill="#6f7f38"/><ellipse cx="543.4" cy="45.5" rx="4.4" ry="2.4" transform="rotate(164 543.4 45.5)" fill="#6f7f38"/><ellipse cx="530.3" cy="108.2" rx="4.6" ry="2.0" transform="rotate(148 530.3 108.2)" fill="#8c9640"/><ellipse cx="548.4" cy="100.3" rx="2.8" ry="1.9" transform="rotate(128 548.4 100.3)" fill="#56662e"/><ellipse cx="527.9" cy="114.5" rx="2.6" ry="2.6" transform="rotate(159 527.9 114.5)" fill="#b5bd5c"/><ellipse cx="535.8" cy="125.4" rx="2.6" ry="2.8" transform="rotate(85 535.8 125.4)" fill="#2f3a1e"/><ellipse cx="533.7" cy="48.6" rx="3.4" ry="1.8" transform="rotate(121 533.7 48.6)" fill="#2f3a1e"/><ellipse cx="536.4" cy="121.4" rx="4.2" ry="2.2" transform="rotate(137 536.4 121.4)" fill="#3f4d24"/><ellipse cx="544.7" cy="130.4" rx="2.8" ry="2.9" transform="rotate(2 544.7 130.4)" fill="#56662e"/><ellipse cx="529.7" cy="152.0" rx="3.3" ry="2.2" transform="rotate(57 529.7 152.0)" fill="#8c9640"/><ellipse cx="520.2" cy="113.6" rx="3.7" ry="2.3" transform="rotate(148 520.2 113.6)" fill="#8c9640"/><ellipse cx="549.1" cy="119.1" rx="2.5" ry="2.1" transform="rotate(106 549.1 119.1)" fill="#2f3a1e"/><ellipse cx="525.1" cy="183.1" rx="2.8" ry="2.5" transform="rotate(38 525.1 183.1)" fill="#56662e"/><ellipse cx="537.5" cy="131.3" rx="4.2" ry="3.0" transform="rotate(154 537.5 131.3)" fill="#56662e"/><ellipse cx="535.4" cy="166.9" rx="4.3" ry="1.9" transform="rotate(132 535.4 166.9)" fill="#56662e"/><ellipse cx="525.1" cy="181.3" rx="4.2" ry="1.8" transform="rotate(136 525.1 181.3)" fill="#6f7f38"/><ellipse cx="535.9" cy="122.8" rx="4.8" ry="2.0" transform="rotate(173 535.9 122.8)" fill="#2f3a1e"/><ellipse cx="530.9" cy="134.5" rx="3.3" ry="2.4" transform="rotate(172 530.9 134.5)" fill="#8c9640"/><ellipse cx="529.4" cy="145.6" rx="4.3" ry="2.3" transform="rotate(29 529.4 145.6)" fill="#3f4d24"/><ellipse cx="534.2" cy="82.4" rx="3.5" ry="2.1" transform="rotate(141 534.2 82.4)" fill="#6f7f38"/><ellipse cx="529.4" cy="151.4" rx="2.7" ry="3.0" transform="rotate(126 529.4 151.4)" fill="#b5bd5c"/><ellipse cx="519.5" cy="72.2" rx="4.6" ry="2.4" transform="rotate(55 519.5 72.2)" fill="#8c9640"/><ellipse cx="532.6" cy="187.2" rx="3.4" ry="2.7" transform="rotate(42 532.6 187.2)" fill="#8c9640"/><ellipse cx="555.2" cy="81.1" rx="3.6" ry="2.4" transform="rotate(146 555.2 81.1)" fill="#3f4d24"/><ellipse cx="543.7" cy="196.2" rx="4.5" ry="2.4" transform="rotate(139 543.7 196.2)" fill="#8c9640"/><ellipse cx="557.1" cy="96.2" rx="4.5" ry="1.9" transform="rotate(135 557.1 96.2)" fill="#56662e"/><ellipse cx="556.4" cy="88.2" rx="4.3" ry="2.9" transform="rotate(105 556.4 88.2)" fill="#3f4d24"/><ellipse cx="532.2" cy="155.5" rx="4.5" ry="2.7" transform="rotate(41 532.2 155.5)" fill="#b5bd5c"/><ellipse cx="539.5" cy="131.1" rx="3.3" ry="2.3" transform="rotate(36 539.5 131.1)" fill="#56662e"/><ellipse cx="556.1" cy="82.1" rx="3.4" ry="2.4" transform="rotate(72 556.1 82.1)" fill="#b5bd5c"/><ellipse cx="535.0" cy="178.7" rx="3.7" ry="2.8" transform="rotate(66 535.0 178.7)" fill="#8c9640"/><ellipse cx="542.2" cy="161.7" rx="3.4" ry="2.3" transform="rotate(3 542.2 161.7)" fill="#3f4d24"/><ellipse cx="558.7" cy="60.2" rx="4.0" ry="1.9" transform="rotate(166 558.7 60.2)" fill="#6f7f38"/><ellipse cx="560.5" cy="96.7" rx="4.5" ry="2.9" transform="rotate(45 560.5 96.7)" fill="#3f4d24"/><ellipse cx="556.0" cy="88.7" rx="2.6" ry="1.6" transform="rotate(66 556.0 88.7)" fill="#2f3a1e"/><ellipse cx="539.5" cy="43.0" rx="2.8" ry="2.9" transform="rotate(46 539.5 43.0)" fill="#b5bd5c"/><ellipse cx="549.4" cy="128.2" rx="3.4" ry="1.9" transform="rotate(129 549.4 128.2)" fill="#56662e"/><ellipse cx="550.7" cy="55.8" rx="4.8" ry="2.9" transform="rotate(150 550.7 55.8)" fill="#3f4d24"/><ellipse cx="526.5" cy="76.0" rx="4.4" ry="2.3" transform="rotate(18 526.5 76.0)" fill="#6f7f38"/><ellipse cx="548.5" cy="145.5" rx="3.2" ry="2.4" transform="rotate(136 548.5 145.5)" fill="#3f4d24"/><ellipse cx="534.4" cy="114.3" rx="3.4" ry="2.1" transform="rotate(79 534.4 114.3)" fill="#56662e"/><ellipse cx="540.2" cy="168.3" rx="4.8" ry="2.7" transform="rotate(28 540.2 168.3)" fill="#56662e"/><ellipse cx="544.3" cy="14.2" rx="4.4" ry="2.7" transform="rotate(172 544.3 14.2)" fill="#8c9640"/><ellipse cx="478.1" cy="20.1" rx="3.3" ry="2.8" transform="rotate(85 478.1 20.1)" fill="#2f3a1e"/><ellipse cx="518.4" cy="39.0" rx="3.0" ry="2.2" transform="rotate(160 518.4 39.0)" fill="#8c9640"/><ellipse cx="480.9" cy="31.2" rx="2.9" ry="2.0" transform="rotate(151 480.9 31.2)" fill="#6f7f38"/><ellipse cx="487.4" cy="29.3" rx="3.6" ry="2.3" transform="rotate(27 487.4 29.3)" fill="#b5bd5c"/><ellipse cx="531.5" cy="24.6" rx="3.1" ry="1.9" transform="rotate(65 531.5 24.6)" fill="#6f7f38"/><ellipse cx="473.0" cy="20.9" rx="3.2" ry="2.9" transform="rotate(10 473.0 20.9)" fill="#2f3a1e"/><ellipse cx="478.2" cy="28.9" rx="3.6" ry="2.3" transform="rotate(91 478.2 28.9)" fill="#8c9640"/><ellipse cx="518.3" cy="31.9" rx="3.0" ry="2.4" transform="rotate(24 518.3 31.9)" fill="#56662e"/><ellipse cx="514.1" cy="33.6" rx="4.0" ry="2.8" transform="rotate(160 514.1 33.6)" fill="#2f3a1e"/><ellipse cx="514.7" cy="33.7" rx="4.0" ry="2.6" transform="rotate(146 514.7 33.7)" fill="#b5bd5c"/><ellipse cx="551.0" cy="25.9" rx="3.8" ry="2.8" transform="rotate(164 551.0 25.9)" fill="#b5bd5c"/><ellipse cx="479.0" cy="36.9" rx="4.7" ry="2.3" transform="rotate(2 479.0 36.9)" fill="#8c9640"/><ellipse cx="543.8" cy="15.4" rx="3.9" ry="3.0" transform="rotate(6 543.8 15.4)" fill="#2f3a1e"/><ellipse cx="526.2" cy="25.6" rx="3.8" ry="2.2" transform="rotate(92 526.2 25.6)" fill="#3f4d24"/><ellipse cx="529.1" cy="43.1" rx="4.8" ry="2.7" transform="rotate(156 529.1 43.1)" fill="#b5bd5c"/><ellipse cx="508.9" cy="32.5" rx="4.9" ry="2.3" transform="rotate(92 508.9 32.5)" fill="#b5bd5c"/><ellipse cx="491.8" cy="29.8" rx="2.7" ry="2.5" transform="rotate(30 491.8 29.8)" fill="#6f7f38"/><ellipse cx="539.4" cy="21.9" rx="2.7" ry="2.6" transform="rotate(35 539.4 21.9)" fill="#3f4d24"/><ellipse cx="478.8" cy="19.9" rx="3.1" ry="2.2" transform="rotate(63 478.8 19.9)" fill="#3f4d24"/><ellipse cx="500.0" cy="28.9" rx="3.7" ry="2.3" transform="rotate(50 500.0 28.9)" fill="#3f4d24"/><ellipse cx="542.9" cy="38.3" rx="3.7" ry="2.2" transform="rotate(170 542.9 38.3)" fill="#3f4d24"/><ellipse cx="469.7" cy="27.3" rx="4.6" ry="2.3" transform="rotate(71 469.7 27.3)" fill="#3f4d24"/><ellipse cx="486.8" cy="30.9" rx="3.3" ry="2.2" transform="rotate(176 486.8 30.9)" fill="#6f7f38"/><ellipse cx="488.3" cy="24.0" rx="3.8" ry="2.9" transform="rotate(168 488.3 24.0)" fill="#56662e"/><ellipse cx="481.1" cy="23.9" rx="2.8" ry="1.9" transform="rotate(58 481.1 23.9)" fill="#56662e"/><ellipse cx="520.6" cy="28.8" rx="4.9" ry="2.7" transform="rotate(168 520.6 28.8)" fill="#2f3a1e"/><ellipse cx="469.8" cy="17.7" rx="4.5" ry="1.7" transform="rotate(18 469.8 17.7)" fill="#3f4d24"/><ellipse cx="490.2" cy="36.7" rx="3.2" ry="2.0" transform="rotate(116 490.2 36.7)" fill="#3f4d24"/><ellipse cx="487.8" cy="28.2" rx="4.8" ry="2.2" transform="rotate(92 487.8 28.2)" fill="#6f7f38"/><ellipse cx="472.3" cy="21.5" rx="4.3" ry="2.6" transform="rotate(51 472.3 21.5)" fill="#8c9640"/><ellipse cx="492.5" cy="25.1" rx="3.0" ry="2.6" transform="rotate(82 492.5 25.1)" fill="#b5bd5c"/><ellipse cx="511.5" cy="27.4" rx="2.6" ry="2.1" transform="rotate(33 511.5 27.4)" fill="#b5bd5c"/><ellipse cx="524.5" cy="25.5" rx="3.4" ry="2.8" transform="rotate(42 524.5 25.5)" fill="#b5bd5c"/><ellipse cx="528.3" cy="44.4" rx="3.0" ry="1.7" transform="rotate(3 528.3 44.4)" fill="#b5bd5c"/><ellipse cx="544.2" cy="28.6" rx="4.3" ry="1.8" transform="rotate(40 544.2 28.6)" fill="#2f3a1e"/><ellipse cx="498.2" cy="32.7" rx="3.4" ry="2.5" transform="rotate(110 498.2 32.7)" fill="#6f7f38"/><ellipse cx="472.7" cy="24.5" rx="4.4" ry="2.7" transform="rotate(85 472.7 24.5)" fill="#2f3a1e"/><ellipse cx="500.4" cy="26.1" rx="4.7" ry="1.6" transform="rotate(137 500.4 26.1)" fill="#b5bd5c"/><ellipse cx="517.1" cy="41.8" rx="2.9" ry="2.8" transform="rotate(50 517.1 41.8)" fill="#b5bd5c"/><ellipse cx="497.7" cy="35.8" rx="3.6" ry="2.6" transform="rotate(52 497.7 35.8)" fill="#8c9640"/><ellipse cx="500.6" cy="21.8" rx="2.5" ry="2.6" transform="rotate(178 500.6 21.8)" fill="#8c9640"/><ellipse cx="524.2" cy="34.0" rx="2.9" ry="2.4" transform="rotate(104 524.2 34.0)" fill="#3f4d24"/><ellipse cx="475.7" cy="40.9" rx="4.0" ry="1.9" transform="rotate(58 475.7 40.9)" fill="#8c9640"/><ellipse cx="481.5" cy="23.9" rx="3.1" ry="2.9" transform="rotate(53 481.5 23.9)" fill="#b5bd5c"/><ellipse cx="460.7" cy="20.8" rx="3.8" ry="2.3" transform="rotate(123 460.7 20.8)" fill="#8c9640"/><ellipse cx="534.2" cy="30.8" rx="3.6" ry="1.6" transform="rotate(12 534.2 30.8)" fill="#56662e"/><ellipse cx="542.5" cy="29.3" rx="3.9" ry="2.4" transform="rotate(158 542.5 29.3)" fill="#8c9640"/><ellipse cx="502.7" cy="32.3" rx="5.0" ry="2.1" transform="rotate(95 502.7 32.3)" fill="#3f4d24"/><ellipse cx="530.7" cy="48.6" rx="4.6" ry="2.3" transform="rotate(19 530.7 48.6)" fill="#6f7f38"/><ellipse cx="510.0" cy="8.2" rx="4.7" ry="2.2" transform="rotate(28 510.0 8.2)" fill="#6f7f38"/><ellipse cx="491.2" cy="39.3" rx="3.5" ry="1.7" transform="rotate(101 491.2 39.3)" fill="#3f4d24"/><ellipse cx="545.1" cy="25.2" rx="2.6" ry="2.2" transform="rotate(141 545.1 25.2)" fill="#6f7f38"/><ellipse cx="477.1" cy="22.7" rx="3.5" ry="1.7" transform="rotate(2 477.1 22.7)" fill="#3f4d24"/><ellipse cx="527.0" cy="23.4" rx="3.2" ry="2.5" transform="rotate(95 527.0 23.4)" fill="#56662e"/><ellipse cx="504.2" cy="31.5" rx="2.9" ry="2.7" transform="rotate(19 504.2 31.5)" fill="#3f4d24"/><ellipse cx="500.8" cy="34.1" rx="4.1" ry="2.6" transform="rotate(104 500.8 34.1)" fill="#56662e"/><ellipse cx="492.4" cy="31.4" rx="3.2" ry="1.7" transform="rotate(162 492.4 31.4)" fill="#b5bd5c"/><ellipse cx="494.1" cy="27.5" rx="3.1" ry="1.9" transform="rotate(28 494.1 27.5)" fill="#b5bd5c"/><ellipse cx="476.3" cy="37.6" rx="4.5" ry="2.0" transform="rotate(108 476.3 37.6)" fill="#8c9640"/><ellipse cx="560.3" cy="21.6" rx="4.2" ry="2.5" transform="rotate(105 560.3 21.6)" fill="#8c9640"/><ellipse cx="538.2" cy="280.1" rx="3.7" ry="2.7" transform="rotate(43 538.2 280.1)" fill="#56662e"/><ellipse cx="533.6" cy="121.3" rx="2.5" ry="2.8" transform="rotate(71 533.6 121.3)" fill="#6f7f38"/><ellipse cx="531.8" cy="170.8" rx="3.5" ry="2.2" transform="rotate(11 531.8 170.8)" fill="#3f4d24"/><ellipse cx="541.9" cy="292.2" rx="3.9" ry="2.1" transform="rotate(84 541.9 292.2)" fill="#6f7f38"/><ellipse cx="535.8" cy="11.2" rx="4.2" ry="2.1" transform="rotate(28 535.8 11.2)" fill="#2f3a1e"/><ellipse cx="532.3" cy="62.8" rx="3.9" ry="2.7" transform="rotate(99 532.3 62.8)" fill="#8c9640"/><ellipse cx="555.6" cy="257.6" rx="2.9" ry="2.1" transform="rotate(130 555.6 257.6)" fill="#8c9640"/><ellipse cx="548.8" cy="185.8" rx="3.2" ry="2.3" transform="rotate(36 548.8 185.8)" fill="#8c9640"/><ellipse cx="550.3" cy="301.5" rx="5.0" ry="2.4" transform="rotate(79 550.3 301.5)" fill="#6f7f38"/><ellipse cx="545.6" cy="129.3" rx="3.8" ry="1.8" transform="rotate(135 545.6 129.3)" fill="#2f3a1e"/><ellipse cx="544.9" cy="173.6" rx="3.2" ry="2.7" transform="rotate(69 544.9 173.6)" fill="#2f3a1e"/><ellipse cx="551.7" cy="46.4" rx="2.5" ry="2.6" transform="rotate(125 551.7 46.4)" fill="#56662e"/><ellipse cx="538.6" cy="212.1" rx="2.8" ry="2.4" transform="rotate(65 538.6 212.1)" fill="#2f3a1e"/><ellipse cx="553.0" cy="61.7" rx="4.3" ry="1.7" transform="rotate(51 553.0 61.7)" fill="#2f3a1e"/><ellipse cx="541.2" cy="113.9" rx="4.6" ry="2.3" transform="rotate(113 541.2 113.9)" fill="#2f3a1e"/><ellipse cx="556.4" cy="42.3" rx="3.2" ry="1.6" transform="rotate(122 556.4 42.3)" fill="#2f3a1e"/><ellipse cx="550.8" cy="287.0" rx="2.6" ry="2.6" transform="rotate(83 550.8 287.0)" fill="#8c9640"/><ellipse cx="539.6" cy="201.2" rx="3.0" ry="1.8" transform="rotate(164 539.6 201.2)" fill="#2f3a1e"/><ellipse cx="535.2" cy="216.8" rx="3.5" ry="2.5" transform="rotate(77 535.2 216.8)" fill="#6f7f38"/><ellipse cx="533.2" cy="236.3" rx="3.9" ry="2.5" transform="rotate(169 533.2 236.3)" fill="#2f3a1e"/><ellipse cx="555.7" cy="182.5" rx="4.3" ry="2.0" transform="rotate(78 555.7 182.5)" fill="#2f3a1e"/><ellipse cx="547.0" cy="299.4" rx="2.8" ry="2.7" transform="rotate(117 547.0 299.4)" fill="#3f4d24"/><ellipse cx="556.9" cy="187.2" rx="4.2" ry="3.0" transform="rotate(122 556.9 187.2)" fill="#3f4d24"/><ellipse cx="554.1" cy="67.2" rx="4.8" ry="2.6" transform="rotate(15 554.1 67.2)" fill="#2f3a1e"/><ellipse cx="552.5" cy="319.4" rx="4.0" ry="1.9" transform="rotate(94 552.5 319.4)" fill="#6f7f38"/><ellipse cx="559.2" cy="135.7" rx="4.8" ry="2.6" transform="rotate(132 559.2 135.7)" fill="#2f3a1e"/><ellipse cx="548.7" cy="162.8" rx="4.2" ry="1.9" transform="rotate(121 548.7 162.8)" fill="#56662e"/><ellipse cx="544.2" cy="60.6" rx="4.9" ry="2.8" transform="rotate(100 544.2 60.6)" fill="#56662e"/><ellipse cx="546.0" cy="310.2" rx="4.1" ry="2.4" transform="rotate(44 546.0 310.2)" fill="#3f4d24"/><ellipse cx="533.5" cy="111.1" rx="2.7" ry="2.5" transform="rotate(24 533.5 111.1)" fill="#2f3a1e"/><ellipse cx="551.3" cy="214.5" rx="3.1" ry="1.9" transform="rotate(92 551.3 214.5)" fill="#8c9640"/><ellipse cx="532.4" cy="205.1" rx="4.2" ry="1.8" transform="rotate(127 532.4 205.1)" fill="#2f3a1e"/><ellipse cx="546.6" cy="106.7" rx="4.5" ry="2.4" transform="rotate(136 546.6 106.7)" fill="#56662e"/><ellipse cx="550.3" cy="49.5" rx="4.9" ry="2.8" transform="rotate(73 550.3 49.5)" fill="#56662e"/><ellipse cx="531.8" cy="92.6" rx="3.4" ry="1.9" transform="rotate(10 531.8 92.6)" fill="#6f7f38"/><ellipse cx="538.0" cy="35.4" rx="3.3" ry="2.9" transform="rotate(29 538.0 35.4)" fill="#8c9640"/><ellipse cx="543.5" cy="116.2" rx="2.9" ry="1.7" transform="rotate(1 543.5 116.2)" fill="#8c9640"/><ellipse cx="530.8" cy="229.5" rx="5.0" ry="2.4" transform="rotate(19 530.8 229.5)" fill="#8c9640"/><ellipse cx="559.6" cy="156.3" rx="4.5" ry="2.1" transform="rotate(64 559.6 156.3)" fill="#3f4d24"/><ellipse cx="549.3" cy="200.9" rx="4.8" ry="2.5" transform="rotate(45 549.3 200.9)" fill="#56662e"/><ellipse cx="530.6" cy="239.2" rx="2.6" ry="2.2" transform="rotate(26 530.6 239.2)" fill="#6f7f38"/><ellipse cx="534.1" cy="204.2" rx="4.6" ry="2.9" transform="rotate(30 534.1 204.2)" fill="#2f3a1e"/><ellipse cx="555.4" cy="237.5" rx="3.3" ry="1.9" transform="rotate(148 555.4 237.5)" fill="#6f7f38"/><ellipse cx="535.6" cy="43.6" rx="4.8" ry="2.8" transform="rotate(45 535.6 43.6)" fill="#3f4d24"/><ellipse cx="529.4" cy="181.4" rx="4.1" ry="2.7" transform="rotate(127 529.4 181.4)" fill="#3f4d24"/><ellipse cx="559.2" cy="158.2" rx="3.7" ry="1.8" transform="rotate(53 559.2 158.2)" fill="#2f3a1e"/><ellipse cx="548.7" cy="45.4" rx="3.1" ry="1.8" transform="rotate(114 548.7 45.4)" fill="#8c9640"/><ellipse cx="531.0" cy="12.8" rx="3.6" ry="1.9" transform="rotate(130 531.0 12.8)" fill="#3f4d24"/><ellipse cx="529.1" cy="195.4" rx="4.6" ry="2.3" transform="rotate(25 529.1 195.4)" fill="#3f4d24"/><ellipse cx="549.8" cy="164.7" rx="3.6" ry="2.1" transform="rotate(78 549.8 164.7)" fill="#2f3a1e"/><ellipse cx="559.5" cy="56.4" rx="4.3" ry="2.1" transform="rotate(0 559.5 56.4)" fill="#2f3a1e"/><ellipse cx="550.3" cy="181.6" rx="3.7" ry="2.4" transform="rotate(93 550.3 181.6)" fill="#8c9640"/><ellipse cx="560.1" cy="290.8" rx="4.7" ry="3.0" transform="rotate(173 560.1 290.8)" fill="#2f3a1e"/><ellipse cx="530.7" cy="259.1" rx="4.3" ry="2.1" transform="rotate(118 530.7 259.1)" fill="#2f3a1e"/><ellipse cx="546.8" cy="304.9" rx="3.7" ry="2.5" transform="rotate(53 546.8 304.9)" fill="#6f7f38"/><ellipse cx="545.5" cy="202.8" rx="4.6" ry="1.9" transform="rotate(133 545.5 202.8)" fill="#2f3a1e"/><ellipse cx="530.8" cy="211.4" rx="3.4" ry="2.4" transform="rotate(74 530.8 211.4)" fill="#2f3a1e"/><ellipse cx="535.9" cy="141.2" rx="3.2" ry="1.9" transform="rotate(174 535.9 141.2)" fill="#56662e"/><ellipse cx="546.1" cy="35.9" rx="4.7" ry="2.0" transform="rotate(17 546.1 35.9)" fill="#2f3a1e"/><ellipse cx="550.1" cy="226.9" rx="3.1" ry="2.2" transform="rotate(97 550.1 226.9)" fill="#2f3a1e"/><ellipse cx="531.7" cy="164.2" rx="4.0" ry="1.7" transform="rotate(73 531.7 164.2)" fill="#3f4d24"/><ellipse cx="554.4" cy="43.0" rx="3.8" ry="2.3" transform="rotate(150 554.4 43.0)" fill="#3f4d24"/><ellipse cx="548.7" cy="307.3" rx="3.8" ry="2.2" transform="rotate(123 548.7 307.3)" fill="#2f3a1e"/><ellipse cx="533.7" cy="307.2" rx="3.9" ry="2.7" transform="rotate(24 533.7 307.2)" fill="#2f3a1e"/><ellipse cx="529.9" cy="75.8" rx="3.4" ry="1.6" transform="rotate(106 529.9 75.8)" fill="#56662e"/><ellipse cx="543.2" cy="38.6" rx="2.8" ry="2.9" transform="rotate(15 543.2 38.6)" fill="#56662e"/><ellipse cx="546.6" cy="293.6" rx="4.7" ry="1.8" transform="rotate(134 546.6 293.6)" fill="#6f7f38"/><ellipse cx="554.5" cy="235.5" rx="2.5" ry="2.0" transform="rotate(43 554.5 235.5)" fill="#2f3a1e"/><ellipse cx="552.3" cy="303.4" rx="4.3" ry="1.7" transform="rotate(108 552.3 303.4)" fill="#3f4d24"/><ellipse cx="539.7" cy="104.8" rx="4.0" ry="1.6" transform="rotate(163 539.7 104.8)" fill="#56662e"/><ellipse cx="536.4" cy="61.8" rx="3.6" ry="2.8" transform="rotate(104 536.4 61.8)" fill="#3f4d24"/><ellipse cx="554.1" cy="156.2" rx="2.7" ry="2.0" transform="rotate(27 554.1 156.2)" fill="#6f7f38"/><ellipse cx="556.8" cy="214.3" rx="4.6" ry="2.4" transform="rotate(45 556.8 214.3)" fill="#2f3a1e"/><ellipse cx="553.1" cy="86.0" rx="3.6" ry="1.6" transform="rotate(179 553.1 86.0)" fill="#8c9640"/><ellipse cx="544.6" cy="279.4" rx="4.5" ry="1.6" transform="rotate(32 544.6 279.4)" fill="#2f3a1e"/><ellipse cx="550.4" cy="125.6" rx="3.7" ry="1.8" transform="rotate(152 550.4 125.6)" fill="#8c9640"/><ellipse cx="535.6" cy="306.5" rx="3.8" ry="2.1" transform="rotate(95 535.6 306.5)" fill="#6f7f38"/><ellipse cx="557.5" cy="188.6" rx="2.6" ry="1.8" transform="rotate(64 557.5 188.6)" fill="#8c9640"/><ellipse cx="538.9" cy="149.9" rx="4.8" ry="2.0" transform="rotate(60 538.9 149.9)" fill="#8c9640"/><ellipse cx="539.0" cy="6.6" rx="3.6" ry="3.0" transform="rotate(8 539.0 6.6)" fill="#56662e"/><ellipse cx="552.0" cy="46.0" rx="3.5" ry="1.7" transform="rotate(178 552.0 46.0)" fill="#6f7f38"/><ellipse cx="546.8" cy="169.0" rx="4.9" ry="3.0" transform="rotate(6 546.8 169.0)" fill="#2f3a1e"/><ellipse cx="557.8" cy="30.5" rx="3.0" ry="2.2" transform="rotate(102 557.8 30.5)" fill="#3f4d24"/><ellipse cx="540.0" cy="90.1" rx="4.5" ry="2.8" transform="rotate(168 540.0 90.1)" fill="#2f3a1e"/><ellipse cx="530.4" cy="308.1" rx="3.4" ry="2.1" transform="rotate(153 530.4 308.1)" fill="#56662e"/><ellipse cx="539.6" cy="176.2" rx="3.5" ry="1.7" transform="rotate(60 539.6 176.2)" fill="#6f7f38"/><ellipse cx="557.2" cy="250.4" rx="3.8" ry="2.9" transform="rotate(145 557.2 250.4)" fill="#6f7f38"/><ellipse cx="533.0" cy="65.7" rx="4.7" ry="2.5" transform="rotate(72 533.0 65.7)" fill="#8c9640"/><ellipse cx="546.8" cy="96.8" rx="2.9" ry="1.7" transform="rotate(54 546.8 96.8)" fill="#6f7f38"/><ellipse cx="536.3" cy="183.0" rx="4.1" ry="3.0" transform="rotate(13 536.3 183.0)" fill="#56662e"/><ellipse cx="547.3" cy="25.6" rx="2.9" ry="2.4" transform="rotate(177 547.3 25.6)" fill="#6f7f38"/><ellipse cx="560.0" cy="220.9" rx="4.3" ry="2.9" transform="rotate(150 560.0 220.9)" fill="#6f7f38"/><ellipse cx="557.7" cy="88.3" rx="3.1" ry="1.6" transform="rotate(29 557.7 88.3)" fill="#6f7f38"/><ellipse cx="535.8" cy="6.4" rx="2.6" ry="2.2" transform="rotate(160 535.8 6.4)" fill="#6f7f38"/><ellipse cx="556.5" cy="207.4" rx="3.0" ry="2.6" transform="rotate(173 556.5 207.4)" fill="#2f3a1e"/><ellipse cx="529.6" cy="23.5" rx="4.5" ry="2.4" transform="rotate(129 529.6 23.5)" fill="#3f4d24"/><ellipse cx="534.2" cy="171.8" rx="4.7" ry="2.5" transform="rotate(166 534.2 171.8)" fill="#56662e"/><ellipse cx="538.6" cy="277.7" rx="2.6" ry="2.3" transform="rotate(109 538.6 277.7)" fill="#6f7f38"/><ellipse cx="533.8" cy="276.3" rx="4.5" ry="1.7" transform="rotate(110 533.8 276.3)" fill="#8c9640"/><ellipse cx="560.6" cy="127.9" rx="4.9" ry="2.8" transform="rotate(4 560.6 127.9)" fill="#6f7f38"/><ellipse cx="546.6" cy="316.0" rx="2.6" ry="2.5" transform="rotate(130 546.6 316.0)" fill="#6f7f38"/><ellipse cx="533.2" cy="6.0" rx="3.0" ry="2.3" transform="rotate(151 533.2 6.0)" fill="#6f7f38"/><ellipse cx="554.9" cy="135.4" rx="3.8" ry="2.4" transform="rotate(99 554.9 135.4)" fill="#2f3a1e"/><ellipse cx="560.4" cy="184.0" rx="3.1" ry="2.5" transform="rotate(146 560.4 184.0)" fill="#8c9640"/><ellipse cx="553.2" cy="248.3" rx="3.3" ry="2.7" transform="rotate(175 553.2 248.3)" fill="#8c9640"/><ellipse cx="546.5" cy="115.6" rx="3.8" ry="2.0" transform="rotate(45 546.5 115.6)" fill="#2f3a1e"/><ellipse cx="543.7" cy="209.7" rx="4.4" ry="2.1" transform="rotate(178 543.7 209.7)" fill="#56662e"/><ellipse cx="541.2" cy="313.3" rx="4.8" ry="2.5" transform="rotate(22 541.2 313.3)" fill="#2f3a1e"/><ellipse cx="544.6" cy="177.7" rx="3.0" ry="2.9" transform="rotate(65 544.6 177.7)" fill="#56662e"/><ellipse cx="557.8" cy="278.7" rx="4.6" ry="2.7" transform="rotate(95 557.8 278.7)" fill="#6f7f38"/><ellipse cx="553.7" cy="77.6" rx="5.0" ry="2.3" transform="rotate(114 553.7 77.6)" fill="#6f7f38"/><ellipse cx="557.7" cy="124.5" rx="3.0" ry="2.7" transform="rotate(4 557.7 124.5)" fill="#2f3a1e"/><ellipse cx="552.2" cy="20.9" rx="4.1" ry="2.2" transform="rotate(155 552.2 20.9)" fill="#3f4d24"/><ellipse cx="535.5" cy="120.3" rx="4.8" ry="2.1" transform="rotate(118 535.5 120.3)" fill="#56662e"/><ellipse cx="529.0" cy="6.6" rx="4.3" ry="1.9" transform="rotate(63 529.0 6.6)" fill="#6f7f38"/><ellipse cx="553.1" cy="205.7" rx="3.2" ry="3.0" transform="rotate(38 553.1 205.7)" fill="#2f3a1e"/><ellipse cx="554.1" cy="152.8" rx="4.8" ry="2.7" transform="rotate(171 554.1 152.8)" fill="#56662e"/><ellipse cx="555.2" cy="90.4" rx="3.3" ry="2.3" transform="rotate(160 555.2 90.4)" fill="#56662e"/><ellipse cx="538.6" cy="195.3" rx="4.9" ry="1.9" transform="rotate(9 538.6 195.3)" fill="#56662e"/><ellipse cx="556.1" cy="235.4" rx="2.6" ry="2.7" transform="rotate(79 556.1 235.4)" fill="#8c9640"/><ellipse cx="556.5" cy="318.3" rx="3.2" ry="1.6" transform="rotate(20 556.5 318.3)" fill="#3f4d24"/><ellipse cx="532.4" cy="96.9" rx="3.8" ry="2.1" transform="rotate(135 532.4 96.9)" fill="#8c9640"/><ellipse cx="550.5" cy="28.9" rx="3.3" ry="2.9" transform="rotate(128 550.5 28.9)" fill="#6f7f38"/><ellipse cx="560.3" cy="10.5" rx="3.1" ry="2.7" transform="rotate(124 560.3 10.5)" fill="#3f4d24"/><ellipse cx="532.4" cy="190.5" rx="3.9" ry="2.6" transform="rotate(131 532.4 190.5)" fill="#3f4d24"/><ellipse cx="560.7" cy="101.3" rx="4.7" ry="1.8" transform="rotate(87 560.7 101.3)" fill="#56662e"/><ellipse cx="545.3" cy="0.8" rx="3.1" ry="2.4" transform="rotate(113 545.3 0.8)" fill="#2f3a1e"/><ellipse cx="544.5" cy="36.0" rx="3.4" ry="2.3" transform="rotate(165 544.5 36.0)" fill="#6f7f38"/><ellipse cx="560.0" cy="273.0" rx="4.9" ry="1.9" transform="rotate(13 560.0 273.0)" fill="#2f3a1e"/><ellipse cx="533.8" cy="84.7" rx="2.7" ry="1.7" transform="rotate(91 533.8 84.7)" fill="#8c9640"/><ellipse cx="554.1" cy="304.6" rx="3.2" ry="2.1" transform="rotate(7 554.1 304.6)" fill="#8c9640"/><ellipse cx="546.0" cy="175.6" rx="4.2" ry="3.0" transform="rotate(157 546.0 175.6)" fill="#2f3a1e"/><ellipse cx="536.9" cy="135.0" rx="3.8" ry="2.1" transform="rotate(27 536.9 135.0)" fill="#8c9640"/><ellipse cx="557.1" cy="257.2" rx="4.7" ry="2.5" transform="rotate(43 557.1 257.2)" fill="#2f3a1e"/><ellipse cx="558.6" cy="81.5" rx="4.0" ry="2.1" transform="rotate(43 558.6 81.5)" fill="#56662e"/><ellipse cx="549.9" cy="27.8" rx="4.1" ry="1.6" transform="rotate(128 549.9 27.8)" fill="#8c9640"/><ellipse cx="550.9" cy="103.8" rx="4.1" ry="2.4" transform="rotate(56 550.9 103.8)" fill="#2f3a1e"/><ellipse cx="528.0" cy="238.8" rx="4.6" ry="2.3" transform="rotate(106 528.0 238.8)" fill="#8c9640"/><ellipse cx="535.7" cy="201.4" rx="4.4" ry="2.1" transform="rotate(128 535.7 201.4)" fill="#8c9640"/><ellipse cx="560.2" cy="85.3" rx="4.1" ry="2.8" transform="rotate(12 560.2 85.3)" fill="#2f3a1e"/><ellipse cx="549.9" cy="295.7" rx="4.4" ry="2.0" transform="rotate(151 549.9 295.7)" fill="#2f3a1e"/><ellipse cx="539.5" cy="188.6" rx="3.9" ry="3.0" transform="rotate(11 539.5 188.6)" fill="#2f3a1e"/><ellipse cx="540.0" cy="65.5" rx="2.9" ry="2.1" transform="rotate(121 540.0 65.5)" fill="#56662e"/><ellipse cx="555.1" cy="147.3" rx="4.1" ry="2.8" transform="rotate(160 555.1 147.3)" fill="#3f4d24"/><ellipse cx="538.6" cy="115.8" rx="4.7" ry="2.2" transform="rotate(73 538.6 115.8)" fill="#2f3a1e"/><ellipse cx="536.3" cy="32.9" rx="3.4" ry="2.7" transform="rotate(93 536.3 32.9)" fill="#8c9640"/><ellipse cx="549.9" cy="88.0" rx="3.2" ry="2.2" transform="rotate(20 549.9 88.0)" fill="#2f3a1e"/><ellipse cx="543.8" cy="255.5" rx="4.4" ry="1.8" transform="rotate(122 543.8 255.5)" fill="#6f7f38"/><ellipse cx="544.1" cy="211.3" rx="4.1" ry="2.3" transform="rotate(144 544.1 211.3)" fill="#6f7f38"/><ellipse cx="528.6" cy="64.3" rx="3.9" ry="1.7" transform="rotate(32 528.6 64.3)" fill="#2f3a1e"/><ellipse cx="546.0" cy="293.4" rx="3.1" ry="2.0" transform="rotate(78 546.0 293.4)" fill="#2f3a1e"/><ellipse cx="549.0" cy="274.8" rx="3.0" ry="2.2" transform="rotate(142 549.0 274.8)" fill="#2f3a1e"/><ellipse cx="553.8" cy="294.6" rx="4.3" ry="2.1" transform="rotate(7 553.8 294.6)" fill="#6f7f38"/><ellipse cx="560.0" cy="137.9" rx="4.0" ry="2.0" transform="rotate(42 560.0 137.9)" fill="#2f3a1e"/><ellipse cx="532.3" cy="197.9" rx="4.9" ry="2.8" transform="rotate(104 532.3 197.9)" fill="#3f4d24"/><ellipse cx="550.0" cy="105.4" rx="2.7" ry="2.7" transform="rotate(68 550.0 105.4)" fill="#2f3a1e"/><ellipse cx="541.7" cy="299.4" rx="4.1" ry="2.7" transform="rotate(19 541.7 299.4)" fill="#2f3a1e"/><ellipse cx="543.3" cy="147.9" rx="4.6" ry="2.2" transform="rotate(85 543.3 147.9)" fill="#3f4d24"/><ellipse cx="542.5" cy="157.2" rx="3.8" ry="2.8" transform="rotate(120 542.5 157.2)" fill="#2f3a1e"/></g>
 <path d="M554 0H561V362H554z" fill="#1f2818" opacity="0.85"/>
 <rect width="14" height="362" fill="url(#vigl)"/>
 <rect width="561" height="10" fill="url(#vigt)"/>
</svg>

 <div class="a" style="left:1003px;top:525px;width:226px;height:129px;background:#1b1a1a">
  <div class="a" style="left:16px;top:8px;width:13.5px;height:13.5px;border-radius:50%;background:#e8e8e8"></div>
  <div class="a" style="left:18px;top:10px;width:9.5px;height:9.5px;border-radius:50%;background:#e81416"></div>
  <div class="a t" style="left:36px;top:9px;font-size:12.5px;color:#f0f0f0;letter-spacing:-0.3px">Meeting now</div>
  <div class="a" style="left:205px;top:17px;width:8px;height:1.5px;background:#bbb"></div>
  <div class="a" style="left:89.5px;top:32px;width:49px;height:49px;border-radius:50%;background:#ebd6e2"></div>
  <div class="a t" style="left:89.5px;top:47px;width:49px;text-align:center;font-size:19.5px;color:#6b2458;-webkit-text-stroke:0.6px #6b2458">MG</div>
  <div class="a" style="left:55px;top:92px;width:116px;height:29px;border-radius:2px;background:#3c3c3c;overflow:hidden">
   <div class="a" style="left:87px;top:0;width:29px;height:29px;background:#c13a4e"></div>
  </div>
  <svg class="a" style="left:62px;top:99px" width="16" height="14" viewBox="0 0 16 14"><path d="M1.5 4h8.5a1 1 0 0 1 1 1v5a1 1 0 0 1-1 1H1.5a1 1 0 0 1-1-1V5a1 1 0 0 1 1-1zM11.5 6.5l3.5-2.5v7l-3.5-2.5z" fill="#eee"/><path d="M1 13.5L14 1" stroke="#3c3c3c" stroke-width="2.2"/><path d="M1.2 13.5L14 1" stroke="#eee" stroke-width="1"/></svg>
  <svg class="a" style="left:92px;top:99px" width="12" height="15" viewBox="0 0 12 15"><rect x="3.5" y="0.5" width="5" height="9" rx="2.5" fill="#eee"/><path d="M1.5 7a4.5 4.5 0 0 0 9 0M6 11.5v3" stroke="#eee" stroke-width="1" fill="none"/></svg>
  <svg class="a" style="left:120px;top:99px" width="15" height="14" viewBox="0 0 15 14"><path d="M4 11H2a1 1 0 0 1-1-1V2a1 1 0 0 1 1-1h11a1 1 0 0 1 1 1v8a1 1 0 0 1-1 1h-2" stroke="#ddd" stroke-width="1" fill="none"/><path d="M5.5 8l4 4.5M9.5 8l-4 4.5" stroke="#fff" stroke-width="1.3"/></svg>
  <svg class="a" style="left:148px;top:101px" width="16" height="10" viewBox="0 0 16 10"><path d="M1.5 6.5c-.5-1 0-2 1.2-2.6C5 3 11 3 13.3 3.9c1.2.6 1.7 1.6 1.2 2.6l-.4.6c-.3.4-.9.5-1.4.3l-1.7-.5c-.5-.2-.7-.6-.7-1.1v-.6c-1.5-.5-4.1-.5-5.6 0v.6c0 .5-.2.9-.7 1.1l-1.7.5c-.5.2-1.1.1-1.4-.3z" fill="#fff"/></svg>
 </div>
 <div class="a t" style="left:39.8px;top:653px;font-size:8.5px;font-weight:bold;color:#d0c8ec;letter-spacing:3.45px">SEITE 06</div>
</div>
<div id="strip" class="a"></div>
<div class="a t" style="left:22px;top:806px;font-size:17px;color:#fff;letter-spacing:0.1px">Atraf Mustafayev</div>
<div class="av" style="left:92px;top:880px;width:61px;height:61px;background:#6264a7;color:#fff;font-size:19px;font-weight:bold;line-height:61px">+4</div>
<svg class="a" style="left:190px;top:865px" width="100" height="90" viewBox="0 0 100 90"><circle cx="30" cy="47" r="24" fill="#252525"/><circle cx="64" cy="34" r="30" fill="#272727"/><circle cx="52" cy="48" r="32" fill="#2a2a2a"/><path d="M50 16a32 32 0 0 1 26 14" stroke="#3a3d3d" stroke-width="2" fill="none"/></svg>
<div class="av" style="left:332px;top:878px;width:64px;height:64px;background:#d7d3e8;color:#252365;font-size:25px;line-height:65px">M</div>
<div class="av" style="left:453px;top:878px;width:64px;height:64px;background:#d8e4e9;color:#234352;font-size:25px;line-height:65px">BC</div>
<div class="a" style="left:546px;top:843px;width:259px;height:135px;background:#3b3b3b"></div>
<div class="a" style="left:805px;top:843px;width:259px;height:135px;background:#393939"></div>
<div class="a" style="left:1064px;top:843px;width:260px;height:135px;background:radial-gradient(ellipse 60% 70% at 50% 35%,#6a6aa6 0%,#5a5a92 50%,#45456f 100%)"></div>
<div class="a" style="left:1324px;top:843px;width:259px;height:135px;background:#393939"></div>
<div class="a" style="left:1583px;top:843px;width:260px;height:135px;background:#484746"></div>
<div class="av" style="left:643.5px;top:878px;width:64px;height:64px;background:#e5ebd9;color:#4a6b2e;font-size:25px;line-height:65px">CP</div>
<div class="av" style="left:902.5px;top:878px;width:64px;height:64px;background:#d7e3e9;color:#235161;font-size:25px;line-height:65px">JO</div>
<div class="a" style="left:1149.5px;top:865px;width:90px;height:90px;border-radius:50%;border:4.5px solid #a3a5fb"></div>
<div class="av" style="left:1162.5px;top:878px;width:64px;height:64px;background:#d2ebdc;color:#1e6b3c;font-size:25px;line-height:65px;box-shadow:0 6px 9px rgba(20,20,50,.75)">AM</div>
<div class="av" style="left:1421.5px;top:878px;width:64px;height:64px;background:#ebd6e1;color:#6a2150;font-size:25px;line-height:65px">MG</div>
<div class="av" style="left:1673px;top:869.5px;width:81px;height:81px;background:#f3d9dd;color:#7b2935;font-size:30px;line-height:84px">EČ</div>
<div class="a" style="left:552px;top:942px;width:112px;height:35px;background:#2e2e2e;clip-path:polygon(0 50%,12% 8%,40% 0,85% 4%,100% 30%,98% 90%,70% 100%,12% 100%)"></div>
<div class="nm" style="left:827px;top:953px;font-size:16.6px">Julia Osuch</div>
<div class="nm" style="left:1087px;top:953px">Atraf Mustafayev</div>
<div class="nm" style="left:1347px;top:953px;font-size:16.6px">Marijana Jakopič Ganić</div>
<svg class="a" style="left:667px;top:951px" width="20" height="21" viewBox="0 0 20 21" fill="none" stroke="#fff" stroke-width="1.4" stroke-linecap="round"><rect x="8" y="2" width="5.5" height="10" rx="2.75" fill="#fff" stroke="none"/><path d="M5.5 9.5a5.2 5.2 0 0 0 10.4 0M10.7 15v4"/><path d="M2 19.5L17.5 3" stroke="#333" stroke-width="2.6"/><path d="M2.5 19.5L17.5 3.5"/></svg>
<svg class="a" style="left:926px;top:951px" width="20" height="21" viewBox="0 0 20 21" fill="none" stroke="#fff" stroke-width="1.4" stroke-linecap="round"><rect x="8" y="2" width="5.5" height="10" rx="2.75" fill="#fff" stroke="none"/><path d="M5.5 9.5a5.2 5.2 0 0 0 10.4 0M10.7 15v4"/><path d="M2 19.5L17.5 3" stroke="#333" stroke-width="2.6"/><path d="M2.5 19.5L17.5 3.5"/></svg>
<svg class="a" style="left:1534px;top:951px" width="20" height="21" viewBox="0 0 20 21" fill="none" stroke="#fff" stroke-width="1.4" stroke-linecap="round"><rect x="8" y="2" width="5.5" height="10" rx="2.75" fill="#fff" stroke="none"/><path d="M5.5 9.5a5.2 5.2 0 0 0 10.4 0M10.7 15v4"/><path d="M2 19.5L17.5 3" stroke="#333" stroke-width="2.6"/><path d="M2.5 19.5L17.5 3.5"/></svg>

<div id="task" class="a"></div>
<svg class="a" style="left:22px;top:996px" width="25" height="25" viewBox="0 0 25 25" fill="#fff"><path d="M0.8 3.4L10.5 2V11.2H0.8zM11.7 1.8L24.1 0V11.2H11.7zM0.8 12.4H10.5V21.6L0.8 20.3zM11.7 12.4H24.1V24L11.7 22.2z"/></svg>
<div class="a" style="left:69px;top:979px;width:496px;height:58px;background:#f2f2f2;border-left:1px solid #b5b5b5;border-right:1.5px solid #c6c6c6;border-bottom:2px solid #c6c6c6"></div>
<svg class="a" style="left:84px;top:994px" width="28" height="28" viewBox="0 0 28 28" fill="none" stroke="#1a1a1a" stroke-width="1.5"><circle cx="17.6" cy="10.5" r="7"/><path d="M12.6 15.5L3 25"/></svg>
<div class="a t" style="left:127px;top:1000px;font-size:22px;color:#333">Upišite ovdje za pretraživanje</div>
<svg class="a" style="left:585px;top:994px" width="30" height="28" viewBox="0 0 30 28" fill="none" stroke="#e6e6e6" stroke-width="1.4"><path d="M3.5 2.5V6.2H18.3V2.5M3.5 9.3H18.3V18.7H3.5zM3.5 25V21.5H18.3V25M24.6 3V25"/><rect x="23" y="9.8" width="3.2" height="3.2" fill="#fff" stroke="none"/></svg>
<!-- store -->
<svg class="a" style="left:650px;top:990px" width="36" height="37" viewBox="0 0 36 37"><path d="M9.5 10V4.5a3 3 0 0 1 3-3h11a3 3 0 0 1 3 3V10" fill="none" stroke="#e8e8e8" stroke-width="2"/><rect x="1.2" y="9.8" width="33.8" height="26" rx="1.5" fill="#f2f2f2"/><rect x="1.2" y="9.8" width="33.8" height="2.5" fill="#dedede"/><rect x="12" y="17" width="6" height="6" fill="#f25022"/><rect x="19" y="17" width="6" height="6" fill="#7fba00"/><rect x="12" y="24" width="6" height="6" fill="#00a4ef"/><rect x="19" y="24" width="6" height="6" fill="#ffb900"/></svg>
<!-- explorer -->
<svg class="a" style="left:714px;top:995px" width="33" height="27" viewBox="0 0 33 27"><path d="M1 3a2 2 0 0 1 2-2h8l2.5 2.5H1z" fill="#e3a20f"/><rect x="1" y="3" width="31" height="21.5" rx="1.5" fill="#ffd35e"/><path d="M6 25V16a2 2 0 0 1 2-2h17a2 2 0 0 1 2 2v9h-5v-6H11v6z" fill="#4a97e0"/></svg>
<!-- edge -->
<svg class="a" style="left:773px;top:989px" width="38" height="38" viewBox="0 0 38 38"><defs><linearGradient id="eg1" x1="0" y1="0.2" x2="1" y2="0.5"><stop offset="0" stop-color="#3cc4f5"/><stop offset="0.45" stop-color="#2cbcd2"/><stop offset="1" stop-color="#66e45a"/></linearGradient><linearGradient id="eg2" x1="0" y1="0" x2="0" y2="1"><stop offset="0" stop-color="#1590de"/><stop offset="1" stop-color="#0a78d0"/></linearGradient></defs><circle cx="18.65" cy="19.35" r="17.5" fill="url(#eg1)"/><path d="M1.3 17.5C4 13.5 11 12.8 16.5 15.3 13.8 17.5 12.8 21 13.5 25 14.5 30 19 34 25.5 35.5 23.5 36.5 21 36.9 18.65 36.9 9 36.9 1.1 29 1.3 17.5z" fill="url(#eg2)"/><path d="M13.5 24C13.5 28.5 17 33 23.5 35.5 28.5 35.5 32.5 31.5 34.3 27 30 28.5 25 28 21.5 25.5 19.5 24.5 17.5 22.5 16 20.5 14.5 21 13.5 22.5 13.5 24z" fill="#0d55a3"/><circle cx="18.6" cy="19.5" r="3.8" fill="#1d1d1d"/><path d="M19.5 22.5C22.5 25.5 28 26.8 35 25.5" stroke="#1d1d1d" stroke-width="2.8" fill="none"/><path d="M30 26.2L37 24.5V30L33.8 27.5z" fill="#1d1d1d"/></svg>
<!-- calc -->
<svg class="a" style="left:839px;top:990px" width="29" height="37" viewBox="0 0 29 37"><rect x="0.8" y="0.8" width="27.2" height="35" rx="1.5" fill="#6d7680"/><rect x="3.2" y="3.5" width="22.4" height="5.5" fill="#4ad4f5"/><g fill="#d5d9dd"><rect x="3.5" y="12" width="5" height="5"/><rect x="11" y="12" width="5" height="5"/><rect x="18.5" y="12" width="5" height="5"/><rect x="3.5" y="19.5" width="5" height="5"/><rect x="11" y="19.5" width="5" height="5"/><rect x="3.5" y="27" width="5" height="5"/><rect x="11" y="27" width="5" height="5"/></g><rect x="18.5" y="19.5" width="5" height="12.5" rx="1" fill="#163c7a"/></svg>
<!-- chrome -->
<svg class="a" style="left:897px;top:991px" width="35" height="35" viewBox="0 0 35 35"><path d="M17.50 17.30L2.46 11.83A16 16 0 0 1 32.00 10.54z" fill="#db4437"/><path d="M17.50 17.30L32.00 10.54A16 16 0 0 1 13.36 32.75z" fill="#f4c20d"/><path d="M17.50 17.30L13.36 32.75A16 16 0 0 1 2.46 11.83z" fill="#0f9d58"/><circle cx="17.5" cy="17.3" r="8" fill="#fff"/><circle cx="17.5" cy="17.3" r="6.4" fill="#4285f4"/></svg>
<!-- firefox -->
<svg class="a" style="left:958px;top:989px" width="37" height="37" viewBox="0 0 37 37"><defs><radialGradient id="ff1" cx="0.6" cy="0.2" r="0.9"><stop offset="0" stop-color="#fff44f"/><stop offset="0.4" stop-color="#ff9a1f"/><stop offset="0.75" stop-color="#ff3d57"/><stop offset="1" stop-color="#e31587"/></radialGradient><radialGradient id="ff2" cx="0.6" cy="0.3" r="0.7"><stop offset="0" stop-color="#b83bfc"/><stop offset="1" stop-color="#5b3ad4"/></radialGradient></defs><path d="M18.5 36C9 36 2 29 2 20c0-5 2-9 4.5-11.5C7 11 8 12 9 12.5 10 9 12 7 14 6c-1 2 0 4 2 4.5C19 7 22 4 23.5 1c3 2 5 5 5.5 8 1 1 2.5 3 3 5 1.5 2 2.5 4 2.5 6.5C34.5 29 27 36 18.5 36z" fill="url(#ff1)"/><ellipse cx="19" cy="20.5" rx="7" ry="6.3" fill="url(#ff2)"/><path d="M6 14c3 0 6 1 8 2.5-3 0-5 1-6 2z" fill="#ffb02e"/></svg>
<!-- math -->
<svg class="a" style="left:1020px;top:990px" width="36" height="37" viewBox="0 0 36 37"><defs><radialGradient id="mg1" cx="0.65" cy="0.3" r="0.8"><stop offset="0" stop-color="#d8e8f4"/><stop offset="0.45" stop-color="#7eaad6"/><stop offset="1" stop-color="#3c74b4"/></radialGradient></defs><circle cx="17.8" cy="18.2" r="17.2" fill="url(#mg1)"/><path d="M8 10.5h11v1.2h-8.5l5 6-5.5 6.5H19v1.2H8l6-7.5z" fill="#f0f4f8"/><text x="21.5" y="17" font-family="Liberation Serif" font-size="10" fill="#f0f4f8">α</text><path d="M22 27h8M26 24.5v.1M26 29.6v.1" stroke="#f0f4f8" stroke-width="1.3" stroke-linecap="round"/></svg>
<!-- word -->
<svg class="a" style="left:1081px;top:992px" width="37" height="33" viewBox="0 0 37 33"><rect x="9" y="1" width="26.5" height="31" rx="1.2" fill="#2b7cd3"/><rect x="9" y="1" width="26.5" height="7.7" rx="1.2" fill="#41a5ee"/><rect x="9" y="16.5" width="26.5" height="7.7" fill="#185abd"/><rect x="9" y="24.2" width="26.5" height="7.8" rx="1.2" fill="#103f91"/><rect x="1" y="8" width="17.5" height="17" rx="1.2" fill="#185abd"/><text x="9.75" y="21.5" text-anchor="middle" font-family="Liberation Sans" font-weight="bold" font-size="12.5" fill="#fff">W</text></svg>
<!-- excel -->
<svg class="a" style="left:1141px;top:992px" width="37" height="33" viewBox="0 0 37 33"><rect x="9" y="1" width="26.5" height="31" rx="1.2" fill="#21a366"/><rect x="9" y="1" width="12.5" height="7.7" fill="#1d9a5e"/><rect x="21.5" y="1" width="14" height="15.5" fill="#33c481"/><rect x="9" y="16.5" width="26.5" height="7.7" fill="#107c41"/><rect x="9" y="24.2" width="26.5" height="7.8" rx="1.2" fill="#185c37"/><rect x="1.5" y="8" width="17.5" height="17" rx="1.2" fill="#107c41"/><text x="10.25" y="21.5" text-anchor="middle" font-family="Liberation Sans" font-weight="bold" font-size="12.5" fill="#fff">X</text></svg>
<!-- ppt -->
<svg class="a" style="left:1202px;top:992px" width="37" height="34" viewBox="0 0 37 34"><circle cx="21" cy="16.5" r="15.5" fill="#d35230"/><path d="M21 1A15.5 15.5 0 0 1 36.5 16.5H21z" fill="#ff8f6b"/><path d="M21 1A15.5 15.5 0 0 0 6 12.5H21z" fill="#ed6c47"/><rect x="1" y="8" width="17.5" height="17" rx="1.2" fill="#c43e1c"/><text x="9.75" y="21.5" text-anchor="middle" font-family="Liberation Sans" font-weight="bold" font-size="12.5" fill="#fff">P</text></svg>
<!-- teams -->
<div class="a" style="left:1252px;top:979px;width:52px;height:58px;background:#4a4a48"></div>
<div class="a" style="left:1305px;top:979px;width:6px;height:58px;background:#3d3d3b"></div>
<svg class="a" style="left:1259px;top:990px" width="44" height="38" viewBox="0 0 44 38"><circle cx="20.5" cy="8" r="5.2" fill="#7b83eb"/><circle cx="31" cy="9" r="3.8" fill="#5059c9"/><rect x="26" y="14.5" width="10.5" height="13" rx="2" fill="#5059c9"/><path d="M12 15h16a2 2 0 0 1 2 2v10a9 9 0 0 1-18 0z" fill="#7b83eb"/><rect x="3" y="10" width="17" height="17" rx="1.2" fill="#4b53bc"/><text x="11.5" y="23.5" text-anchor="middle" font-family="Liberation Sans" font-weight="bold" font-size="12.5" fill="#fff">T</text><circle cx="31" cy="29.5" r="7.2" fill="#c8c8c8"/><circle cx="31" cy="29.5" r="6" fill="#c50f1f"/></svg>
<!-- green bars -->
<div class="a" style="left:706px;top:1034px;width:48px;height:3px;background:#52c553"></div>
<div class="a" style="left:768px;top:1034px;width:47px;height:3px;background:#52c553"></div>
<div class="a" style="left:952px;top:1034px;width:48px;height:3px;background:#52c553"></div>
<div class="a" style="left:1075px;top:1034px;width:35px;height:3px;background:#52c553"></div><div class="a" style="left:1111px;top:1034px;width:12px;height:3px;background:#3d9a40"></div>
<div class="a" style="left:1137px;top:1034px;width:34px;height:3px;background:#52c553"></div><div class="a" style="left:1172px;top:1034px;width:12px;height:3px;background:#3d9a40"></div>
<div class="a" style="left:1197px;top:1034px;width:34px;height:3px;background:#52c553"></div><div class="a" style="left:1232px;top:1034px;width:12px;height:3px;background:#3d9a40"></div>
<div class="a" style="left:1252px;top:1034px;width:52px;height:3px;background:#52c553"></div><div class="a" style="left:1305px;top:1034px;width:6px;height:3px;background:#3d9a40"></div>
<!-- battery -->
<div class="a" style="left:1319px;top:994px;width:71px;height:29px;border:3.5px solid #fff;background:#000"></div>
<div class="a" style="left:1322.5px;top:997.5px;width:40px;height:22px;background:#179c48"></div>
<div class="a" style="left:1390px;top:1002px;width:4px;height:13px;background:#fff"></div>
<div class="a t" style="left:1337px;top:999px;font-size:21px;color:#fff;letter-spacing:-0.5px">55%</div>
<!-- tray -->
<svg class="a" style="left:1434px;top:1000px" width="22" height="15" viewBox="0 0 22 15" fill="none" stroke="#e0e0e0" stroke-width="1.4"><path d="M2.5 12.5L11 3.5l8.5 9"/></svg>
<svg class="a" style="left:1481px;top:998px" width="23" height="22" viewBox="0 0 23 22" fill="none" stroke="#d0d0d0" stroke-width="1.3"><path d="M3 19A16 16 0 0 1 19 3M6.5 19A12.5 12.5 0 0 1 19 6.5M10 19A9 9 0 0 1 19 10M13.5 19A5.5 5.5 0 0 1 19 13.5"/><circle cx="19" cy="19" r="1.4" fill="#fff" stroke="none"/></svg>
<svg class="a" style="left:1524px;top:1000px" width="27" height="19" viewBox="0 0 27 19"><path d="M6 17.5a5 5 0 0 1-.5-10A7.5 7.5 0 0 1 20 6a5.8 5.8 0 0 1 1.5 11.5z" fill="#fff"/><path d="M10 10.5a3.5 3.5 0 0 1 6-2l1-1v3h-3l1-1a2.2 2.2 0 0 0-3.8 1zM17 11.5a3.5 3.5 0 0 1-6 2l-1 1v-3h3l-1 1a2.2 2.2 0 0 0 3.8-1z" fill="#1e1f1d"/></svg>
<svg class="a" style="left:1577px;top:996px" width="24" height="24" viewBox="0 0 24 24" fill="none" stroke="#e0e0e0" stroke-width="1.3" stroke-linecap="round"><path d="M19 2.5L8 18l-2 3 .5-3.5L17.5 1.5z"/><path d="M13 9c4-1 8 0 8 2.5S16 15 13 14.5M7 17c-2-.5-4 0-4.5 1.5S4 21 6 20.5"/></svg>
<div class="a t" style="left:1627px;top:1001px;font-size:18px;color:#fff;letter-spacing:-1.4px">HRV</div>
<div class="a t" style="left:1699px;top:988px;font-size:18px;color:#fff;letter-spacing:-0.9px">13:18</div>
<div class="a t" style="left:1680px;top:1014px;font-size:18px;color:#fff;letter-spacing:-0.6px">6.11.2020.</div>
<svg class="a" style="left:1782px;top:994px" width="40" height="40" viewBox="0 0 40 40"><path d="M3.5 3H27v18H13.5l-6 6v-6h-4z" fill="#fff"/><path d="M7.5 7.5h15M7.5 11h15M7.5 14.5h12" stroke="#777" stroke-width="1.2"/><circle cx="23.5" cy="26.5" r="11" fill="#1e1f1d" stroke="#4a4a4a" stroke-width="1.4"/><text x="23.5" y="32.5" text-anchor="middle" font-family="Liberation Sans" font-weight="bold" font-size="17" fill="#fff">2</text></svg>
<div class="a" style="left:1837px;top:979px;width:2px;height:58px;background:#4a4a4a"></div>

</body></html>
